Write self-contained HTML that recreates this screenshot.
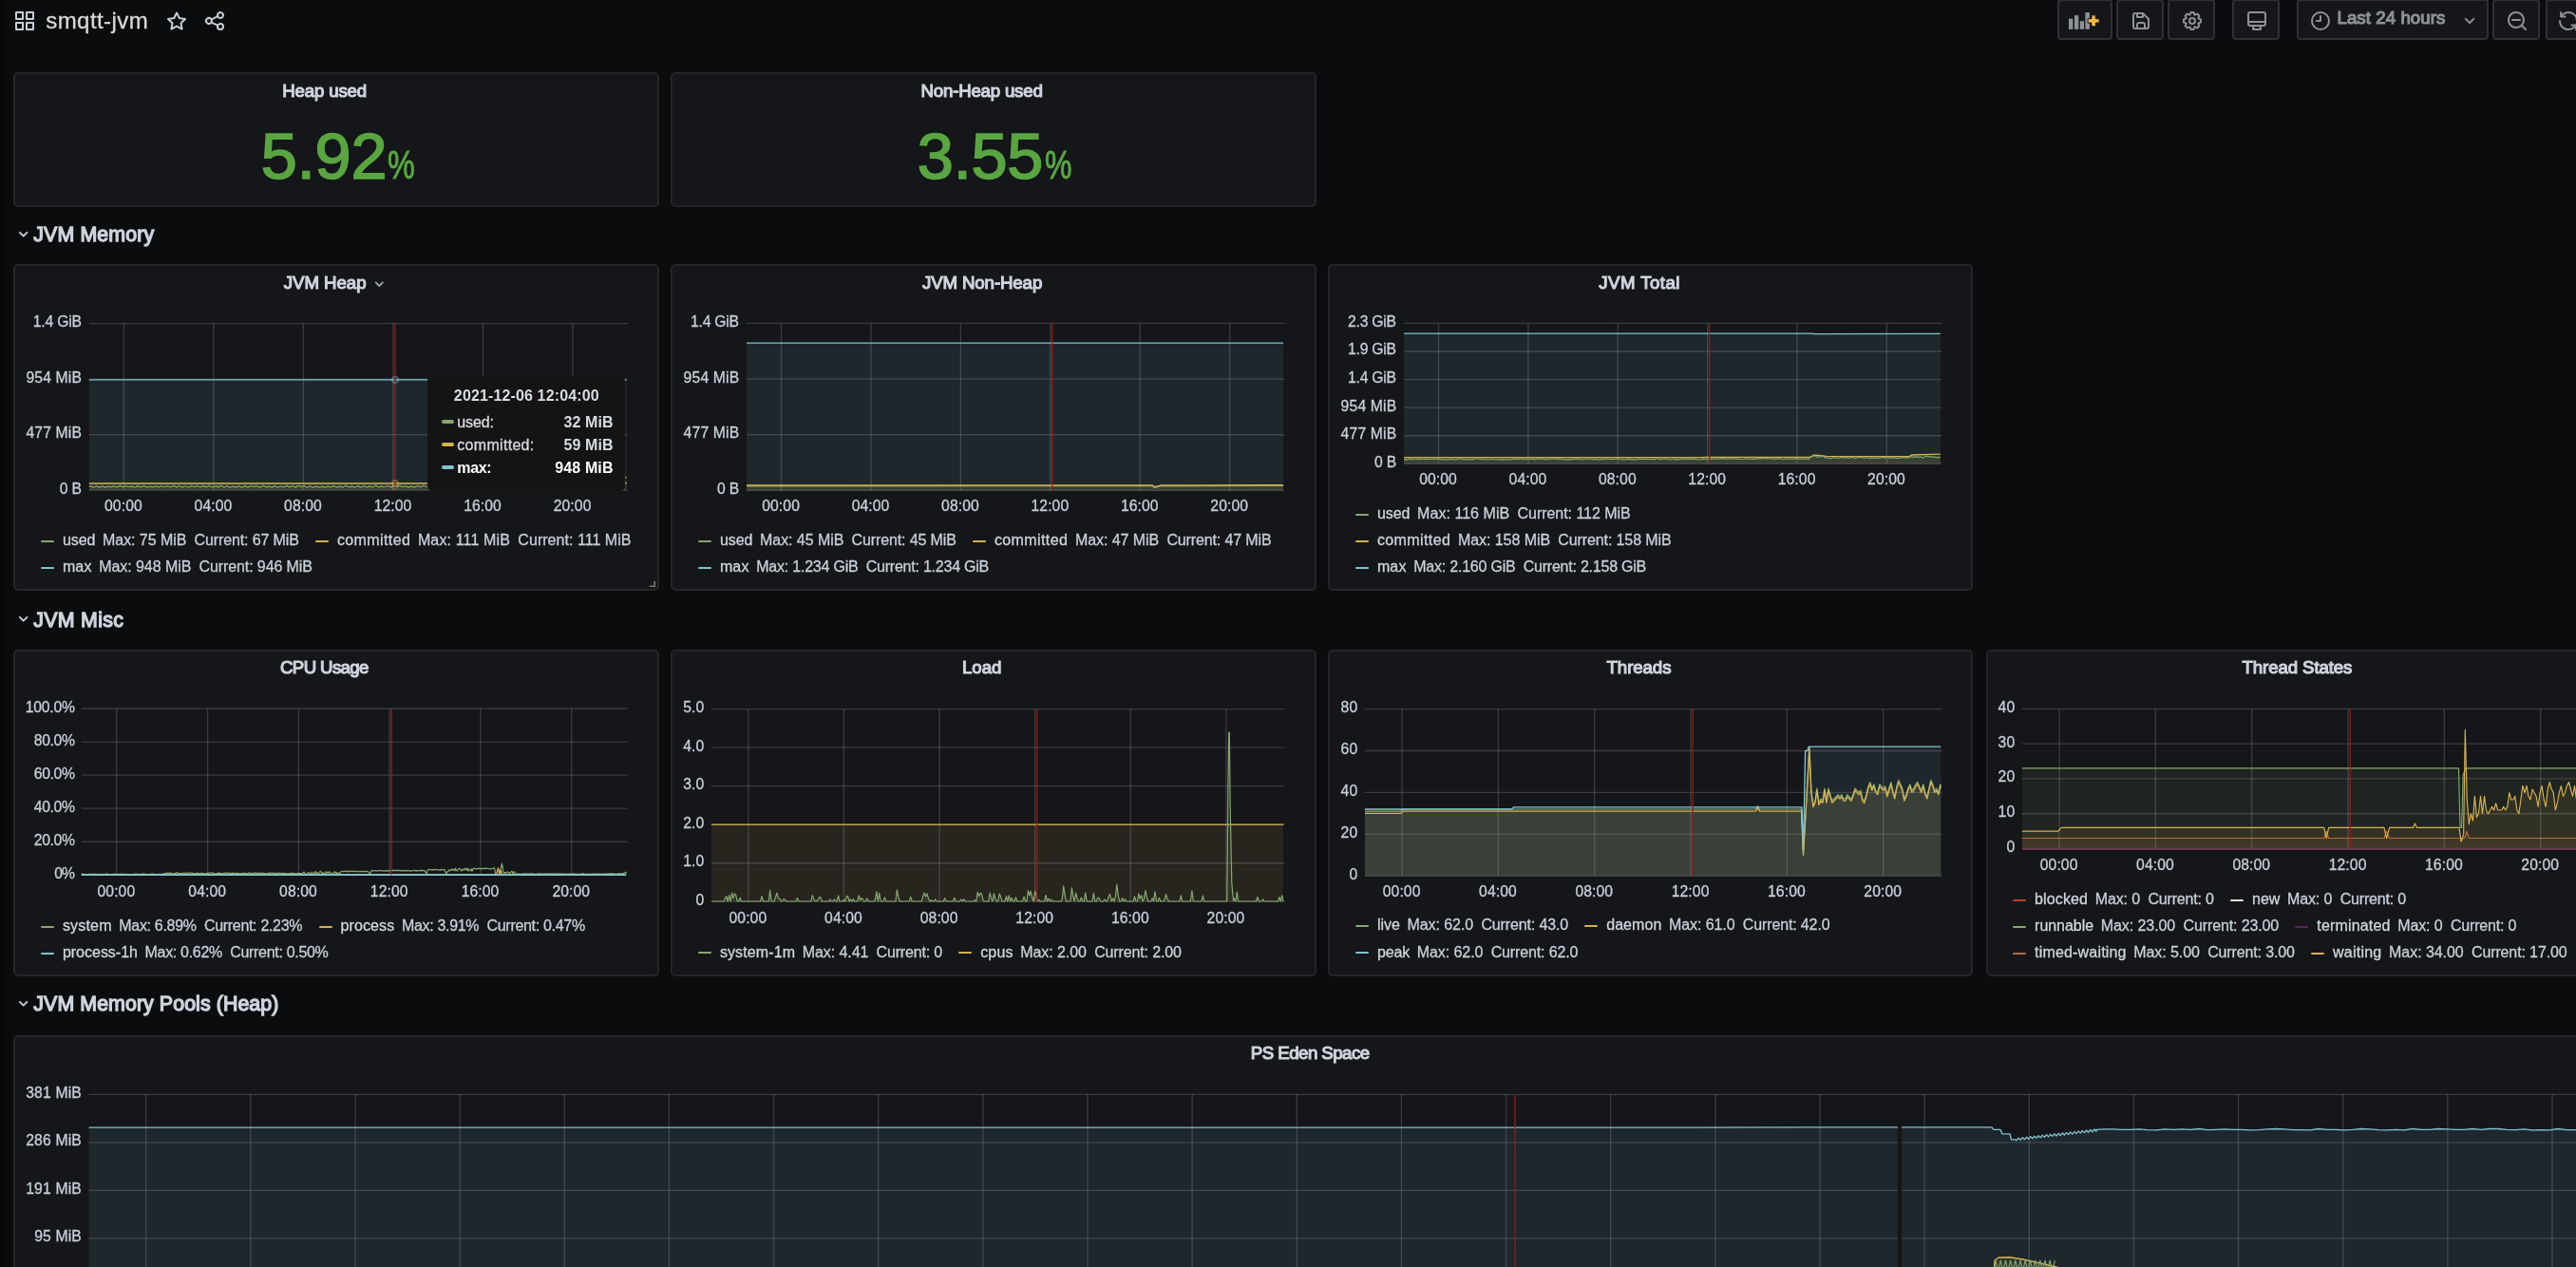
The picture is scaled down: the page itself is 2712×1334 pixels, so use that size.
<!DOCTYPE html>
<html lang="en"><head><meta charset="utf-8"><title>smqtt-jvm - Grafana</title>
<style>
html,body{margin:0;padding:0;background:#0b0c0e;}
body{width:2712px;height:1334px;overflow:hidden;position:relative;font-family:"Liberation Sans",sans-serif;}
#root{will-change:transform;position:absolute;left:0;top:0;width:2712px;height:1334px;overflow:hidden;background:linear-gradient(to right,#060708 0,#0b0c0e 13px);}
.t{position:absolute;white-space:pre;display:block;}
.ic{position:absolute;display:block;overflow:visible;}
.panel{position:absolute;box-sizing:border-box;background:#141619;border:2px solid #232529;border-radius:5px;}
.btn{position:absolute;box-sizing:border-box;background:#141619;border:2px solid #2e3034;border-radius:4px;}
.sw{position:absolute;border-radius:1px;}
.tip{position:absolute;background:#141414;border-radius:5px;}
</style></head><body><div id="root">
<svg class="ic" style="left:13.80px;top:10.00px" width="24" height="24" viewBox="0 0 24 24" fill="#c7d0d9"><path d="M10,13H3a1,1,0,0,0-1,1v7a1,1,0,0,0,1,1h7a1,1,0,0,0,1-1V14A1,1,0,0,0,10,13ZM9,20H4V15H9ZM21,2H14a1,1,0,0,0-1,1v7a1,1,0,0,0,1,1h7a1,1,0,0,0,1-1V3A1,1,0,0,0,21,2ZM20,9H15V4h5Zm1,4H14a1,1,0,0,0-1,1v7a1,1,0,0,0,1,1h7a1,1,0,0,0,1-1V14A1,1,0,0,0,21,13Zm-1,7H15V15h5ZM10,2H3A1,1,0,0,0,2,3v7a1,1,0,0,0,1,1h7a1,1,0,0,0,1-1V3A1,1,0,0,0,10,2ZM9,9H4V4H9Z"/></svg>
<span class="t" style="left:48.30px;top:9.80px;font-size:24px;line-height:24px;color:#d8d9da;letter-spacing:0.417px;-webkit-text-stroke:0.3px #d8d9da;">smqtt-jvm</span>
<svg class="ic" style="left:174.00px;top:10.00px" width="24" height="24" viewBox="0 0 24 24" fill="#c7d0d9"><path d="M22,9.67A1,1,0,0,0,21.14,9l-5.69-.83L12.9,3a1,1,0,0,0-1.8,0L8.55,8.16,2.86,9a1,1,0,0,0-.81.68,1,1,0,0,0,.25,1l4.13,4-1,5.68A1,1,0,0,0,6.9,21.44L12,18.77l5.1,2.67a.93.93,0,0,0,.46.12,1,1,0,0,0,.59-.19,1,1,0,0,0,.4-1l-1-5.68,4.13-4A1,1,0,0,0,22,9.67Zm-6.15,4a1,1,0,0,0-.29.88l.72,4.2-3.76-2a1.06,1.06,0,0,0-.94,0l-3.76,2,.72-4.2a1,1,0,0,0-.29-.88l-3-3,4.21-.61a1,1,0,0,0,.76-.55L12,5.7l1.88,3.82a1,1,0,0,0,.76.55l4.21.61Z"/></svg>
<svg class="ic" style="left:214.20px;top:10.10px" width="24" height="24" viewBox="0 0 24 24" fill="#c7d0d9"><path d="M18,14a4,4,0,0,0-3.08,1.48l-5.1-2.35a3.64,3.64,0,0,0,0-2.26l5.1-2.35A4,4,0,1,0,14,6a4.17,4.17,0,0,0,.07.71L8.79,9.14a4,4,0,1,0,0,5.72l5.28,2.43A4.17,4.17,0,0,0,14,18a4,4,0,1,0,4-4ZM18,4a2,2,0,1,1-2,2A2,2,0,0,1,18,4ZM6,14a2,2,0,1,1,2-2A2,2,0,0,1,6,14Zm12,6a2,2,0,1,1,2-2A2,2,0,0,1,18,20Z"/></svg>
<div class="btn" style="left:2166.30px;top:-1.20px;width:57.50px;height:43.00px;"></div>
<div class="btn" style="left:2228.20px;top:-1.20px;width:49.60px;height:43.00px;"></div>
<div class="btn" style="left:2282.10px;top:-1.20px;width:49.50px;height:43.00px;"></div>
<div class="btn" style="left:2350.30px;top:-1.20px;width:49.40px;height:43.00px;"></div>
<div class="btn" style="left:2418.20px;top:-1.20px;width:201.60px;height:43.00px;"></div>
<div class="btn" style="left:2624.00px;top:-1.20px;width:50.00px;height:43.00px;"></div>
<div class="btn" style="left:2680.00px;top:-1.20px;width:60.00px;height:43.00px;"></div>
<svg class="ic" style="left:2177px;top:12px" width="36" height="20" viewBox="0 0 36 20">
<defs><linearGradient id="pg" x1="0" y1="0" x2="0" y2="1"><stop offset="0" stop-color="#f2a33c"/><stop offset="1" stop-color="#f7cf4c"/></linearGradient></defs>
<g fill="#8e9197"><rect x="1" y="7.7" width="4.4" height="11.1"/><rect x="7" y="4.1" width="4.3" height="14.7"/><rect x="12.8" y="10.2" width="4.3" height="8.6"/><rect x="18.4" y="1.1" width="4.5" height="17.7"/></g>
<path d="M24.9 3.85h4.4v3.8h3.8v4.4h-3.8v3.8h-4.4v-3.8h-3.8v-4.4h3.8z" fill="url(#pg)" stroke="#141619" stroke-width="1"/>
</svg>
<svg class="ic" style="left:2242.10px;top:9.90px" width="24" height="24" viewBox="0 0 24 24" fill="#8e9197"><path d="M20.71,9.29l-6-6a1,1,0,0,0-.32-.21A1.09,1.09,0,0,0,14,3H6A3,3,0,0,0,3,6V18a3,3,0,0,0,3,3H18a3,3,0,0,0,3-3V10A1,1,0,0,0,20.71,9.29ZM9,5h4V7H9Zm6,14H9V16a1,1,0,0,1,1-1h4a1,1,0,0,1,1,1Zm4-1a1,1,0,0,1-1,1H17V16a3,3,0,0,0-3-3H10a3,3,0,0,0-3,3v3H6a1,1,0,0,1-1-1V6A1,1,0,0,1,6,5H7V8A1,1,0,0,0,8,9h6a1,1,0,0,0,1-1V6.41l4,4Z"/></svg>
<svg class="ic" style="left:2296.00px;top:10.00px" width="24" height="24" viewBox="0 0 24 24" fill="#8e9197"><path d="M21.32,9.55l-1.89-.63.89-1.78A1,1,0,0,0,20.13,6L18,3.87a1,1,0,0,0-1.15-.19l-1.78.89-.63-1.89A1,1,0,0,0,13.5,2h-3a1,1,0,0,0-.95.68L8.92,4.57,7.14,3.68A1,1,0,0,0,6,3.87L3.87,6a1,1,0,0,0-.19,1.15l.89,1.78-1.89.63A1,1,0,0,0,2,10.5v3a1,1,0,0,0,.68.95l1.89.63-.89,1.78A1,1,0,0,0,3.87,18L6,20.13a1,1,0,0,0,1.15.19l1.78-.89.63,1.89a1,1,0,0,0,.95.68h3a1,1,0,0,0,.95-.68l.63-1.89,1.78.89A1,1,0,0,0,18,20.13L20.13,18a1,1,0,0,0,.19-1.15l-.89-1.78,1.89-.63A1,1,0,0,0,22,13.5v-3A1,1,0,0,0,21.32,9.55ZM20,12.78l-1.2.4A2,2,0,0,0,17.64,16l.57,1.14-1.1,1.1L16,17.64a2,2,0,0,0-2.79,1.16l-.4,1.2H11.22l-.4-1.2A2,2,0,0,0,8,17.64l-1.14.57-1.1-1.1L6.36,16A2,2,0,0,0,5.2,13.18L4,12.78V11.22l1.2-.4A2,2,0,0,0,6.36,8L5.79,6.89l1.1-1.1L8,6.36A2,2,0,0,0,10.82,5.2l.4-1.2h1.56l.4,1.2A2,2,0,0,0,16,6.36l1.14-.57,1.1,1.1L17.64,8a2,2,0,0,0,1.16,2.79l1.2.4ZM12,8a4,4,0,1,0,4,4A4,4,0,0,0,12,8Zm0,6a2,2,0,1,1,2-2A2,2,0,0,1,12,14Z"/></svg>
<svg class="ic" style="left:2363.90px;top:10.00px" width="24" height="24" viewBox="0 0 24 24" fill="#8e9197"><path d="M19,2H5A3,3,0,0,0,2,5V15a3,3,0,0,0,3,3H7.64l-.58,1a2,2,0,0,0,0,2,2,2,0,0,0,1.75,1h6.46A2,2,0,0,0,17,21a2,2,0,0,0,0-2l-.59-1H19a3,3,0,0,0,3-3V5A3,3,0,0,0,19,2ZM8.77,20,10,18H14l1.2,2ZM20,15a1,1,0,0,1-1,1H5a1,1,0,0,1-1-1V14H20Zm0-3H4V5A1,1,0,0,1,5,4H19a1,1,0,0,1,1,1Z"/></svg>
<svg class="ic" style="left:2430.80px;top:9.90px" width="24" height="24" viewBox="0 0 24 24" fill="#8e9197"><path d="M12,2A10,10,0,1,0,22,12,10,10,0,0,0,12,2Zm0,18a8,8,0,1,1,8-8A8,8,0,0,1,12,20ZM12,6a1,1,0,0,0-1,1v4H8a1,1,0,0,0,0,2h4a1,1,0,0,0,1-1V7A1,1,0,0,0,12,6Z"/></svg>
<span class="t" style="left:2460.48px;top:10.46px;font-size:18.67px;line-height:18.67px;color:#8e9197;letter-spacing:0.071px;-webkit-text-stroke:1.15px #8e9197;">Last 24 hours</span>
<svg class="ic" style="left:2588.00px;top:10.00px" width="24" height="24" viewBox="0 0 24 24" fill="#8e9197"><path d="M17,9.17a1,1,0,0,0-1.41,0L12,12.71,8.46,9.17a1,1,0,0,0-1.41,0,1,1,0,0,0,0,1.42l4.24,4.24a1,1,0,0,0,1.42,0L17,10.59A1,1,0,0,0,17,9.17Z"/></svg>
<svg class="ic" style="left:2637.80px;top:10.00px" width="24" height="24" viewBox="0 0 24 24" fill="#8e9197"><path d="M21.71,20.29,18,16.61A9,9,0,1,0,16.61,18l3.68,3.68a1,1,0,0,0,1.42,0A1,1,0,0,0,21.71,20.29ZM11,18a7,7,0,1,1,7-7A7,7,0,0,1,11,18Zm4-8H7a1,1,0,0,0,0,2h8a1,1,0,0,0,0-2Z"/></svg>
<svg class="ic" style="left:2691.70px;top:10.00px" width="24" height="24" viewBox="0 0 24 24" fill="#8e9197"><path d="M19.91,15.51H15.38a1,1,0,0,0,0,2h2.4A8,8,0,0,1,4,12a1,1,0,0,0-2,0,10,10,0,0,0,16.88,7.23V21a1,1,0,0,0,2,0V16.5A1,1,0,0,0,19.91,15.51ZM12,2A10,10,0,0,0,5.12,4.77V3a1,1,0,0,0-2,0V7.5a1,1,0,0,0,1,1h4.5a1,1,0,0,0,0-2H6.22A8,8,0,0,1,20,12a1,1,0,0,0,2,0A10,10,0,0,0,12,2Z"/></svg>
<div class="panel" style="left:14.00px;top:76.00px;width:680.00px;height:142.00px;"></div>
<span class="t" style="left:297.25px;top:87.47px;font-size:18.67px;line-height:18.67px;color:#ced4dd;letter-spacing:-0.168px;-webkit-text-stroke:1.15px #ced4dd;">Heap used</span>
<span class="t" style="left:274.81px;top:130.55px;font-size:68.5px;line-height:68.5px;color:#59a640;letter-spacing:-0.203px;-webkit-text-stroke:1.7px #59a640;">5.92</span>
<span class="t" style="left:408.15px;top:152.80px;font-size:42px;line-height:42px;color:#59a640;letter-spacing:-6.583px;-webkit-text-stroke:1.0px #59a640;transform:scaleX(0.7703160270880361);transform-origin:0 0;">%</span>
<div class="panel" style="left:706.00px;top:76.00px;width:680.00px;height:142.00px;"></div>
<span class="t" style="left:969.51px;top:87.47px;font-size:18.67px;line-height:18.67px;color:#ced4dd;letter-spacing:-0.198px;-webkit-text-stroke:1.15px #ced4dd;">Non-Heap used</span>
<span class="t" style="left:965.85px;top:130.55px;font-size:68.5px;line-height:68.5px;color:#59a640;letter-spacing:-0.265px;-webkit-text-stroke:1.7px #59a640;">3.55</span>
<span class="t" style="left:1100.06px;top:152.80px;font-size:42px;line-height:42px;color:#59a640;letter-spacing:-6.583px;-webkit-text-stroke:1.0px #59a640;transform:scaleX(0.7618510158013545);transform-origin:0 0;">%</span>
<svg class="ic" style="left:13.50px;top:236.10px" width="21.3" height="21.3" viewBox="0 0 24 24" fill="#c7d0d9"><path d="M17,9.17a1,1,0,0,0-1.41,0L12,12.71,8.46,9.17a1,1,0,0,0-1.41,0,1,1,0,0,0,0,1.42l4.24,4.24a1,1,0,0,0,1.42,0L17,10.59A1,1,0,0,0,17,9.17Z"/></svg>
<span class="t" style="left:35.33px;top:236.64px;font-size:21.33px;line-height:21.33px;color:#ced4dd;letter-spacing:0.132px;-webkit-text-stroke:1.3px #ced4dd;">JVM Memory</span>
<svg class="ic" style="left:13.50px;top:641.00px" width="21.3" height="21.3" viewBox="0 0 24 24" fill="#c7d0d9"><path d="M17,9.17a1,1,0,0,0-1.41,0L12,12.71,8.46,9.17a1,1,0,0,0-1.41,0,1,1,0,0,0,0,1.42l4.24,4.24a1,1,0,0,0,1.42,0L17,10.59A1,1,0,0,0,17,9.17Z"/></svg>
<span class="t" style="left:35.33px;top:642.63px;font-size:21.33px;line-height:21.33px;color:#ced4dd;letter-spacing:0.298px;-webkit-text-stroke:1.3px #ced4dd;">JVM Misc</span>
<svg class="ic" style="left:13.50px;top:1046.30px" width="21.3" height="21.3" viewBox="0 0 24 24" fill="#c7d0d9"><path d="M17,9.17a1,1,0,0,0-1.41,0L12,12.71,8.46,9.17a1,1,0,0,0-1.41,0,1,1,0,0,0,0,1.42l4.24,4.24a1,1,0,0,0,1.42,0L17,10.59A1,1,0,0,0,17,9.17Z"/></svg>
<span class="t" style="left:35.33px;top:1046.63px;font-size:21.33px;line-height:21.33px;color:#ced4dd;letter-spacing:0.092px;-webkit-text-stroke:1.3px #ced4dd;">JVM Memory Pools (Heap)</span>
<div class="panel" style="left:14.00px;top:278.00px;width:680.00px;height:344.00px;"></div>
<span class="t" style="left:298.69px;top:289.47px;font-size:18.67px;line-height:18.67px;color:#ced4dd;letter-spacing:-0.029px;-webkit-text-stroke:1.15px #ced4dd;">JVM Heap</span>
<svg class="ic" style="left:388.60px;top:289.30px" width="20.5" height="20.5" viewBox="0 0 24 24" fill="#9fa7b3"><path d="M17,9.17a1,1,0,0,0-1.41,0L12,12.71,8.46,9.17a1,1,0,0,0-1.41,0,1,1,0,0,0,0,1.42l4.24,4.24a1,1,0,0,0,1.42,0L17,10.59A1,1,0,0,0,17,9.17Z"/></svg>
<svg class="ic" style="left:91px;top:338px" width="573" height="183" viewBox="91 338 573 183"><polygon points="93.8,516.2 93.8,399.8 657.4,399.8 658.5,400.1 659.5,400.1 659.5,516.2" fill="#80C4D4" fill-opacity="0.1"/><polygon points="93.8,516.2 93.8,509.0 522.7,509.0 525.0,507.6 626.6,507.4 629.0,502.9 659.5,502.6 659.5,516.2" fill="#D8B250" fill-opacity="0.1"/><polygon points="93.8,516.2 93.8,512.4 95.7,511.9 97.6,512.6 99.5,513.1 101.4,511.5 103.3,512.5 105.1,513.4 107.0,511.8 108.9,512.4 110.8,513.1 112.7,512.6 114.6,512.0 116.5,512.9 118.4,512.3 120.3,511.9 122.2,512.7 124.1,512.8 125.9,511.3 127.8,511.9 129.7,513.1 131.6,511.6 133.5,512.1 135.4,512.5 137.3,512.7 139.2,511.9 141.1,512.9 143.0,513.0 144.8,511.3 146.7,512.4 148.6,512.9 150.5,511.8 152.4,511.9 154.3,512.9 156.2,512.8 158.1,512.0 160.0,512.9 161.9,512.6 163.8,511.7 165.6,512.4 167.5,512.9 169.4,511.9 171.3,512.0 173.2,512.7 175.1,512.1 177.0,511.8 178.9,512.7 180.8,512.6 182.7,511.2 184.6,512.1 186.4,513.2 188.3,511.3 190.2,512.3 192.1,513.1 194.0,511.9 195.9,512.0 197.8,512.8 199.7,513.0 201.6,511.4 203.5,512.2 205.3,512.8 207.2,511.3 209.1,512.2 211.0,512.8 212.9,511.9 214.8,511.6 216.7,512.9 218.6,512.1 220.5,511.1 222.4,512.6 224.3,512.7 226.1,512.1 228.0,511.9 229.9,512.9 231.8,511.5 233.7,511.4 235.6,513.1 237.5,512.5 239.4,511.4 241.3,513.1 243.2,512.8 245.1,511.9 246.9,512.6 248.8,513.4 250.7,511.6 252.6,512.2 254.5,513.2 256.4,512.4 258.3,511.2 260.2,513.2 262.1,512.7 264.0,511.5 265.9,512.0 267.7,512.6 269.6,511.4 271.5,512.2 273.4,513.1 275.3,512.3 277.2,511.3 279.1,512.4 281.0,512.9 282.9,511.9 284.8,512.7 286.6,513.1 288.5,511.7 290.4,512.0 292.3,513.2 294.2,512.5 296.1,511.8 298.0,513.0 299.9,512.4 301.8,511.1 303.7,512.4 305.6,512.8 307.4,511.5 309.3,512.0 311.2,513.4 313.1,511.5 315.0,511.5 316.9,512.6 318.8,512.0 320.7,511.7 322.6,512.8 324.5,513.1 326.4,511.4 328.2,512.7 330.1,513.4 332.0,512.1 333.9,512.2 335.8,513.1 337.7,512.7 339.6,512.1 341.5,513.1 343.4,513.0 345.3,511.7 347.1,512.8 349.0,512.6 350.9,511.6 352.8,512.3 354.7,513.2 356.6,512.3 358.5,511.8 360.4,513.2 362.3,512.2 364.2,511.1 366.1,512.5 367.9,512.9 369.8,512.1 371.7,512.4 373.6,513.2 375.5,512.2 377.4,511.4 379.3,513.2 381.2,512.9 383.1,511.1 385.0,512.6 386.9,513.2 388.7,511.6 390.6,512.6 392.5,513.0 394.4,511.4 396.3,511.4 398.2,512.8 400.1,512.6 402.0,511.7 403.9,513.0 405.8,512.5 407.7,511.5 409.5,512.0 411.4,513.1 413.3,512.1 415.2,511.6 417.1,512.5 419.0,511.9 420.9,511.3 422.8,512.5 424.7,512.4 426.6,511.8 428.4,512.4 430.3,513.1 432.2,512.2 434.1,512.4 436.0,513.2 437.9,512.3 439.8,511.5 441.7,512.4 443.6,512.6 445.5,511.1 447.4,512.0 449.2,512.4 451.1,511.8 453.0,512.3 454.9,513.3 456.8,512.3 458.7,512.0 460.6,512.8 462.5,512.0 464.4,511.2 466.3,512.6 468.2,512.6 470.0,511.3 471.9,512.6 473.8,512.8 475.7,511.5 477.6,511.5 479.5,512.7 481.4,512.3 483.3,511.9 485.2,512.4 487.1,512.9 488.9,511.3 490.8,511.8 492.7,513.1 494.6,511.9 496.5,511.4 498.4,512.8 500.3,512.5 502.2,512.0 504.1,513.1 506.0,512.2 507.9,511.2 509.7,512.7 511.6,512.6 513.5,511.3 515.4,511.8 517.3,513.2 519.2,512.0 521.1,512.0 523.0,510.2 524.9,510.1 526.8,509.0 528.7,509.3 530.5,511.4 532.4,510.2 534.3,510.3 536.2,511.6 538.1,509.7 540.0,509.4 541.9,510.5 543.8,509.8 545.7,509.3 547.6,511.0 549.5,511.9 551.3,509.7 553.2,509.6 555.1,511.1 557.0,509.6 558.9,510.1 560.8,511.2 562.7,509.8 564.6,509.2 566.5,509.4 568.4,510.3 570.2,509.3 572.1,510.0 574.0,510.8 575.9,508.8 577.8,508.4 579.7,510.9 581.6,508.9 583.5,510.5 585.4,511.5 587.3,511.5 589.2,508.6 591.0,510.5 592.9,510.2 594.8,509.1 596.7,509.9 598.6,510.6 600.5,508.9 602.4,509.8 604.3,510.7 606.2,511.1 608.1,509.1 610.0,510.7 611.8,511.6 613.7,509.4 615.6,510.7 617.5,509.8 619.4,510.1 621.3,510.7 623.2,510.9 625.1,510.7 627.0,506.8 628.9,509.9 630.7,508.5 632.6,508.5 634.5,508.6 636.4,510.2 638.3,507.5 640.2,508.6 642.1,509.8 644.0,508.3 645.9,507.9 647.8,509.1 649.7,509.3 651.5,508.9 653.4,509.8 655.3,509.9 657.2,507.8 659.1,508.4 659.5,509.9 659.5,516.2" fill="#85A870" fill-opacity="0.1"/><path d="M93.8 340.60H661.0 M93.8 399.13H661.0 M93.8 457.67H661.0 M93.8 516.20H661.0" stroke="rgba(204,204,210,0.2)" stroke-width="1.33" fill="none"/><path d="M130.34 340.6V516.2 M224.87 340.6V516.2 M319.40 340.6V516.2 M413.94 340.6V516.2 M508.47 340.6V516.2 M603.00 340.6V516.2" stroke="rgba(204,204,210,0.2)" stroke-width="1.33" fill="none"/><polyline points="93.8,399.8 657.4,399.8 658.5,400.1 659.5,400.1" fill="none" stroke="#80C4D4" stroke-width="1.3" stroke-linejoin="round"/><polyline points="93.8,509.0 522.7,509.0 525.0,507.6 626.6,507.4 629.0,502.9 659.5,502.6" fill="none" stroke="#D8B250" stroke-width="1.3" stroke-linejoin="round"/><polyline points="93.8,512.4 95.7,511.9 97.6,512.6 99.5,513.1 101.4,511.5 103.3,512.5 105.1,513.4 107.0,511.8 108.9,512.4 110.8,513.1 112.7,512.6 114.6,512.0 116.5,512.9 118.4,512.3 120.3,511.9 122.2,512.7 124.1,512.8 125.9,511.3 127.8,511.9 129.7,513.1 131.6,511.6 133.5,512.1 135.4,512.5 137.3,512.7 139.2,511.9 141.1,512.9 143.0,513.0 144.8,511.3 146.7,512.4 148.6,512.9 150.5,511.8 152.4,511.9 154.3,512.9 156.2,512.8 158.1,512.0 160.0,512.9 161.9,512.6 163.8,511.7 165.6,512.4 167.5,512.9 169.4,511.9 171.3,512.0 173.2,512.7 175.1,512.1 177.0,511.8 178.9,512.7 180.8,512.6 182.7,511.2 184.6,512.1 186.4,513.2 188.3,511.3 190.2,512.3 192.1,513.1 194.0,511.9 195.9,512.0 197.8,512.8 199.7,513.0 201.6,511.4 203.5,512.2 205.3,512.8 207.2,511.3 209.1,512.2 211.0,512.8 212.9,511.9 214.8,511.6 216.7,512.9 218.6,512.1 220.5,511.1 222.4,512.6 224.3,512.7 226.1,512.1 228.0,511.9 229.9,512.9 231.8,511.5 233.7,511.4 235.6,513.1 237.5,512.5 239.4,511.4 241.3,513.1 243.2,512.8 245.1,511.9 246.9,512.6 248.8,513.4 250.7,511.6 252.6,512.2 254.5,513.2 256.4,512.4 258.3,511.2 260.2,513.2 262.1,512.7 264.0,511.5 265.9,512.0 267.7,512.6 269.6,511.4 271.5,512.2 273.4,513.1 275.3,512.3 277.2,511.3 279.1,512.4 281.0,512.9 282.9,511.9 284.8,512.7 286.6,513.1 288.5,511.7 290.4,512.0 292.3,513.2 294.2,512.5 296.1,511.8 298.0,513.0 299.9,512.4 301.8,511.1 303.7,512.4 305.6,512.8 307.4,511.5 309.3,512.0 311.2,513.4 313.1,511.5 315.0,511.5 316.9,512.6 318.8,512.0 320.7,511.7 322.6,512.8 324.5,513.1 326.4,511.4 328.2,512.7 330.1,513.4 332.0,512.1 333.9,512.2 335.8,513.1 337.7,512.7 339.6,512.1 341.5,513.1 343.4,513.0 345.3,511.7 347.1,512.8 349.0,512.6 350.9,511.6 352.8,512.3 354.7,513.2 356.6,512.3 358.5,511.8 360.4,513.2 362.3,512.2 364.2,511.1 366.1,512.5 367.9,512.9 369.8,512.1 371.7,512.4 373.6,513.2 375.5,512.2 377.4,511.4 379.3,513.2 381.2,512.9 383.1,511.1 385.0,512.6 386.9,513.2 388.7,511.6 390.6,512.6 392.5,513.0 394.4,511.4 396.3,511.4 398.2,512.8 400.1,512.6 402.0,511.7 403.9,513.0 405.8,512.5 407.7,511.5 409.5,512.0 411.4,513.1 413.3,512.1 415.2,511.6 417.1,512.5 419.0,511.9 420.9,511.3 422.8,512.5 424.7,512.4 426.6,511.8 428.4,512.4 430.3,513.1 432.2,512.2 434.1,512.4 436.0,513.2 437.9,512.3 439.8,511.5 441.7,512.4 443.6,512.6 445.5,511.1 447.4,512.0 449.2,512.4 451.1,511.8 453.0,512.3 454.9,513.3 456.8,512.3 458.7,512.0 460.6,512.8 462.5,512.0 464.4,511.2 466.3,512.6 468.2,512.6 470.0,511.3 471.9,512.6 473.8,512.8 475.7,511.5 477.6,511.5 479.5,512.7 481.4,512.3 483.3,511.9 485.2,512.4 487.1,512.9 488.9,511.3 490.8,511.8 492.7,513.1 494.6,511.9 496.5,511.4 498.4,512.8 500.3,512.5 502.2,512.0 504.1,513.1 506.0,512.2 507.9,511.2 509.7,512.7 511.6,512.6 513.5,511.3 515.4,511.8 517.3,513.2 519.2,512.0 521.1,512.0 523.0,510.2 524.9,510.1 526.8,509.0 528.7,509.3 530.5,511.4 532.4,510.2 534.3,510.3 536.2,511.6 538.1,509.7 540.0,509.4 541.9,510.5 543.8,509.8 545.7,509.3 547.6,511.0 549.5,511.9 551.3,509.7 553.2,509.6 555.1,511.1 557.0,509.6 558.9,510.1 560.8,511.2 562.7,509.8 564.6,509.2 566.5,509.4 568.4,510.3 570.2,509.3 572.1,510.0 574.0,510.8 575.9,508.8 577.8,508.4 579.7,510.9 581.6,508.9 583.5,510.5 585.4,511.5 587.3,511.5 589.2,508.6 591.0,510.5 592.9,510.2 594.8,509.1 596.7,509.9 598.6,510.6 600.5,508.9 602.4,509.8 604.3,510.7 606.2,511.1 608.1,509.1 610.0,510.7 611.8,511.6 613.7,509.4 615.6,510.7 617.5,509.8 619.4,510.1 621.3,510.7 623.2,510.9 625.1,510.7 627.0,506.8 628.9,509.9 630.7,508.5 632.6,508.5 634.5,508.6 636.4,510.2 638.3,507.5 640.2,508.6 642.1,509.8 644.0,508.3 645.9,507.9 647.8,509.1 649.7,509.3 651.5,508.9 653.4,509.8 655.3,509.9 657.2,507.8 659.1,508.4 659.5,509.9" fill="none" stroke="#85A870" stroke-width="1.2" stroke-linejoin="round"/><path d="M415.97 340.6V516.2" stroke="rgba(150,28,24,0.85)" stroke-width="1.5"/></svg>
<span class="t" style="left:34.84px;top:330.95px;font-size:15.7px;line-height:15.7px;color:#c7d0d9;letter-spacing:-0.211px;-webkit-text-stroke:0.3px #c7d0d9;">1.4 GiB</span>
<span class="t" style="left:27.42px;top:389.95px;font-size:15.7px;line-height:15.7px;color:#c7d0d9;letter-spacing:0.162px;-webkit-text-stroke:0.3px #c7d0d9;">954 MiB</span>
<span class="t" style="left:27.42px;top:447.95px;font-size:15.7px;line-height:15.7px;color:#c7d0d9;letter-spacing:0.162px;-webkit-text-stroke:0.3px #c7d0d9;">477 MiB</span>
<span class="t" style="left:62.82px;top:506.95px;font-size:15.7px;line-height:15.7px;color:#c7d0d9;letter-spacing:-0.220px;-webkit-text-stroke:0.3px #c7d0d9;">0 B</span>
<span class="t" style="left:110.03px;top:524.95px;font-size:15.7px;line-height:15.7px;color:#c7d0d9;letter-spacing:0.105px;-webkit-text-stroke:0.3px #c7d0d9;">00:00</span>
<span class="t" style="left:204.56px;top:524.95px;font-size:15.7px;line-height:15.7px;color:#c7d0d9;letter-spacing:0.105px;-webkit-text-stroke:0.3px #c7d0d9;">04:00</span>
<span class="t" style="left:299.10px;top:524.95px;font-size:15.7px;line-height:15.7px;color:#c7d0d9;letter-spacing:0.105px;-webkit-text-stroke:0.3px #c7d0d9;">08:00</span>
<span class="t" style="left:393.63px;top:524.95px;font-size:15.7px;line-height:15.7px;color:#c7d0d9;letter-spacing:0.105px;-webkit-text-stroke:0.3px #c7d0d9;">12:00</span>
<span class="t" style="left:488.16px;top:524.95px;font-size:15.7px;line-height:15.7px;color:#c7d0d9;letter-spacing:0.105px;-webkit-text-stroke:0.3px #c7d0d9;">16:00</span>
<span class="t" style="left:582.70px;top:524.95px;font-size:15.7px;line-height:15.7px;color:#c7d0d9;letter-spacing:0.105px;-webkit-text-stroke:0.3px #c7d0d9;">20:00</span>
<svg class="ic" style="left:408.0px;top:390px" width="16" height="130" viewBox="408.0 390 16 130"><circle cx="416.0" cy="399.8" r="3.2" fill="none" stroke="#80C4D4" stroke-opacity="0.4" stroke-width="1.8"/><circle cx="416.0" cy="509.0" r="3.2" fill="none" stroke="#D8B250" stroke-opacity="0.4" stroke-width="1.8"/><circle cx="416.0" cy="512.3" r="3.2" fill="none" stroke="#85A870" stroke-opacity="0.3" stroke-width="1.8"/></svg>
<div class="tip" style="left:450.20px;top:395.80px;width:207.40px;height:121.20px;"></div>
<span class="t" style="left:477.85px;top:408.80px;font-size:16px;line-height:16px;color:#d8dde4;letter-spacing:0.135px;font-weight:700;">2021-12-06 12:04:00</span>
<div class="sw" style="left:465.30px;top:442.20px;width:12.70px;height:4.20px;background:#85A870;border-radius:2px;"></div>
<span class="t" style="left:481.30px;top:436.80px;font-size:16px;line-height:16px;color:#d8dde4;letter-spacing:-0.139px;-webkit-text-stroke:0.3px #d8dde4;">used:</span>
<span class="t" style="left:593.59px;top:436.80px;font-size:16px;line-height:16px;color:#d8dde4;letter-spacing:0.068px;font-weight:700;">32 MiB</span>
<div class="sw" style="left:465.30px;top:466.00px;width:12.70px;height:4.20px;background:#D8B250;border-radius:2px;"></div>
<span class="t" style="left:481.30px;top:460.80px;font-size:16px;line-height:16px;color:#d8dde4;letter-spacing:0.302px;-webkit-text-stroke:0.3px #d8dde4;">committed:</span>
<span class="t" style="left:593.59px;top:460.80px;font-size:16px;line-height:16px;color:#d8dde4;letter-spacing:0.068px;font-weight:700;">59 MiB</span>
<div class="sw" style="left:465.30px;top:490.20px;width:12.70px;height:4.20px;background:#80C4D4;border-radius:2px;"></div>
<span class="t" style="left:481.30px;top:484.80px;font-size:16px;line-height:16px;color:#ffffff;letter-spacing:-0.317px;font-weight:700;">max:</span>
<span class="t" style="left:584.26px;top:484.80px;font-size:16px;line-height:16px;color:#ffffff;letter-spacing:0.129px;font-weight:700;">948 MiB</span>
<div class="sw" style="left:43.00px;top:569.10px;width:14.00px;height:2.00px;background:#85A870;"></div>
<span class="t" style="left:65.90px;top:560.80px;font-size:16px;line-height:16px;color:#d0d6dd;letter-spacing:-0.031px;-webkit-text-stroke:0.3px #d0d6dd;">used</span>
<span class="t" style="left:108.07px;top:560.80px;font-size:16px;line-height:16px;color:#c7d0d9;letter-spacing:-0.067px;-webkit-text-stroke:0.3px #c7d0d9;">Max: 75 MiB</span>
<span class="t" style="left:204.55px;top:560.80px;font-size:16px;line-height:16px;color:#c7d0d9;letter-spacing:-0.125px;-webkit-text-stroke:0.3px #c7d0d9;">Current: 67 MiB</span>
<div class="sw" style="left:332.02px;top:569.10px;width:14.00px;height:2.00px;background:#D8B250;"></div>
<span class="t" style="left:354.92px;top:560.80px;font-size:16px;line-height:16px;color:#d0d6dd;letter-spacing:0.398px;-webkit-text-stroke:0.3px #d0d6dd;">committed</span>
<span class="t" style="left:439.90px;top:560.80px;font-size:16px;line-height:16px;color:#c7d0d9;letter-spacing:0.144px;-webkit-text-stroke:0.3px #c7d0d9;">Max: 111 MiB</span>
<span class="t" style="left:545.37px;top:560.80px;font-size:16px;line-height:16px;color:#c7d0d9;letter-spacing:0.037px;-webkit-text-stroke:0.3px #c7d0d9;">Current: 111 MiB</span>
<div class="sw" style="left:43.00px;top:596.70px;width:14.00px;height:2.00px;background:#80C4D4;"></div>
<span class="t" style="left:65.90px;top:588.80px;font-size:16px;line-height:16px;color:#d0d6dd;letter-spacing:0.143px;-webkit-text-stroke:0.3px #d0d6dd;">max</span>
<span class="t" style="left:104.16px;top:588.80px;font-size:16px;line-height:16px;color:#c7d0d9;letter-spacing:-0.054px;-webkit-text-stroke:0.3px #c7d0d9;">Max: 948 MiB</span>
<span class="t" style="left:209.62px;top:588.80px;font-size:16px;line-height:16px;color:#c7d0d9;letter-spacing:-0.111px;-webkit-text-stroke:0.3px #c7d0d9;">Current: 946 MiB</span>
<svg class="ic" style="left:683px;top:611px" width="8" height="8" viewBox="0 0 8 8"><path d="M6.2 0.8V6.2H0.8" fill="none" stroke="#7b7873" stroke-width="1.6"/></svg>
<div class="panel" style="left:706.00px;top:278.00px;width:680.00px;height:344.00px;"></div>
<span class="t" style="left:970.92px;top:289.47px;font-size:18.67px;line-height:18.67px;color:#ced4dd;letter-spacing:-0.107px;-webkit-text-stroke:1.15px #ced4dd;">JVM Non-Heap</span>
<svg class="ic" style="left:784px;top:338px" width="572" height="183" viewBox="784 338 572 183"><polygon points="786.0,516.4 786.0,361.2 1351.1,361.2 1351.1,516.4" fill="#80C4D4" fill-opacity="0.1"/><polygon points="786.0,516.4 786.0,511.8 1213.2,511.6 1215.6,513.5 1221.5,511.8 1330.1,511.5 1351.1,511.4 1351.1,516.4" fill="#85A870" fill-opacity="0.1"/><polygon points="786.0,516.4 786.0,511.0 1213.2,510.8 1215.6,512.7 1221.5,511.0 1330.1,510.7 1351.1,510.6 1351.1,516.4" fill="#D8B250" fill-opacity="0.1"/><path d="M786.0 340.40H1352.6 M786.0 399.07H1352.6 M786.0 457.73H1352.6 M786.0 516.40H1352.6" stroke="rgba(204,204,210,0.2)" stroke-width="1.33" fill="none"/><path d="M822.50 340.4V516.4 M916.93 340.4V516.4 M1011.37 340.4V516.4 M1105.80 340.4V516.4 M1200.23 340.4V516.4 M1294.67 340.4V516.4" stroke="rgba(204,204,210,0.2)" stroke-width="1.33" fill="none"/><polyline points="786.0,361.2 1351.1,361.2" fill="none" stroke="#80C4D4" stroke-width="1.3" stroke-linejoin="round"/><polyline points="786.0,511.8 1213.2,511.6 1215.6,513.5 1221.5,511.8 1330.1,511.5 1351.1,511.4" fill="none" stroke="#85A870" stroke-width="1.2" stroke-linejoin="round"/><polyline points="786.0,511.0 1213.2,510.8 1215.6,512.7 1221.5,511.0 1330.1,510.7 1351.1,510.6" fill="none" stroke="#D8B250" stroke-width="1.3" stroke-linejoin="round"/><path d="M1107.83 340.4V516.4" stroke="rgba(150,28,24,0.85)" stroke-width="1.5"/></svg>
<span class="t" style="left:727.04px;top:330.95px;font-size:15.7px;line-height:15.7px;color:#c7d0d9;letter-spacing:-0.211px;-webkit-text-stroke:0.3px #c7d0d9;">1.4 GiB</span>
<span class="t" style="left:719.62px;top:389.95px;font-size:15.7px;line-height:15.7px;color:#c7d0d9;letter-spacing:0.162px;-webkit-text-stroke:0.3px #c7d0d9;">954 MiB</span>
<span class="t" style="left:719.62px;top:447.95px;font-size:15.7px;line-height:15.7px;color:#c7d0d9;letter-spacing:0.162px;-webkit-text-stroke:0.3px #c7d0d9;">477 MiB</span>
<span class="t" style="left:755.02px;top:506.95px;font-size:15.7px;line-height:15.7px;color:#c7d0d9;letter-spacing:-0.220px;-webkit-text-stroke:0.3px #c7d0d9;">0 B</span>
<span class="t" style="left:802.19px;top:524.95px;font-size:15.7px;line-height:15.7px;color:#c7d0d9;letter-spacing:0.105px;-webkit-text-stroke:0.3px #c7d0d9;">00:00</span>
<span class="t" style="left:896.63px;top:524.95px;font-size:15.7px;line-height:15.7px;color:#c7d0d9;letter-spacing:0.105px;-webkit-text-stroke:0.3px #c7d0d9;">04:00</span>
<span class="t" style="left:991.06px;top:524.95px;font-size:15.7px;line-height:15.7px;color:#c7d0d9;letter-spacing:0.105px;-webkit-text-stroke:0.3px #c7d0d9;">08:00</span>
<span class="t" style="left:1085.49px;top:524.95px;font-size:15.7px;line-height:15.7px;color:#c7d0d9;letter-spacing:0.105px;-webkit-text-stroke:0.3px #c7d0d9;">12:00</span>
<span class="t" style="left:1179.93px;top:524.95px;font-size:15.7px;line-height:15.7px;color:#c7d0d9;letter-spacing:0.105px;-webkit-text-stroke:0.3px #c7d0d9;">16:00</span>
<span class="t" style="left:1274.36px;top:524.95px;font-size:15.7px;line-height:15.7px;color:#c7d0d9;letter-spacing:0.105px;-webkit-text-stroke:0.3px #c7d0d9;">20:00</span>
<div class="sw" style="left:735.00px;top:569.10px;width:14.00px;height:2.00px;background:#85A870;"></div>
<span class="t" style="left:757.90px;top:560.80px;font-size:16px;line-height:16px;color:#d0d6dd;letter-spacing:-0.031px;-webkit-text-stroke:0.3px #d0d6dd;">used</span>
<span class="t" style="left:800.07px;top:560.80px;font-size:16px;line-height:16px;color:#c7d0d9;letter-spacing:-0.067px;-webkit-text-stroke:0.3px #c7d0d9;">Max: 45 MiB</span>
<span class="t" style="left:896.55px;top:560.80px;font-size:16px;line-height:16px;color:#c7d0d9;letter-spacing:-0.125px;-webkit-text-stroke:0.3px #c7d0d9;">Current: 45 MiB</span>
<div class="sw" style="left:1024.02px;top:569.10px;width:14.00px;height:2.00px;background:#D8B250;"></div>
<span class="t" style="left:1046.92px;top:560.80px;font-size:16px;line-height:16px;color:#d0d6dd;letter-spacing:0.398px;-webkit-text-stroke:0.3px #d0d6dd;">committed</span>
<span class="t" style="left:1131.90px;top:560.80px;font-size:16px;line-height:16px;color:#c7d0d9;letter-spacing:-0.067px;-webkit-text-stroke:0.3px #c7d0d9;">Max: 47 MiB</span>
<span class="t" style="left:1228.38px;top:560.80px;font-size:16px;line-height:16px;color:#c7d0d9;letter-spacing:-0.125px;-webkit-text-stroke:0.3px #c7d0d9;">Current: 47 MiB</span>
<div class="sw" style="left:735.00px;top:596.70px;width:14.00px;height:2.00px;background:#80C4D4;"></div>
<span class="t" style="left:757.90px;top:588.80px;font-size:16px;line-height:16px;color:#d0d6dd;letter-spacing:0.143px;-webkit-text-stroke:0.3px #d0d6dd;">max</span>
<span class="t" style="left:796.16px;top:588.80px;font-size:16px;line-height:16px;color:#c7d0d9;letter-spacing:-0.213px;-webkit-text-stroke:0.3px #c7d0d9;">Max: 1.234 GiB</span>
<span class="t" style="left:911.75px;top:588.80px;font-size:16px;line-height:16px;color:#c7d0d9;letter-spacing:-0.229px;-webkit-text-stroke:0.3px #c7d0d9;">Current: 1.234 GiB</span>
<div class="panel" style="left:1398.00px;top:278.00px;width:679.00px;height:344.00px;"></div>
<span class="t" style="left:1683.27px;top:289.47px;font-size:18.67px;line-height:18.67px;color:#ced4dd;letter-spacing:0.450px;-webkit-text-stroke:1.15px #ced4dd;">JVM Total</span>
<svg class="ic" style="left:1476px;top:338px" width="572" height="155" viewBox="1476 338 572 155"><polygon points="1478.0,488.3 1478.0,351.1 1906.2,351.1 1910.9,351.7 2042.8,351.4 2042.8,488.3" fill="#80C4D4" fill-opacity="0.1"/><polygon points="1478.0,488.3 1478.0,481.7 1790.6,481.7 1795.3,481.4 1906.2,481.4 1909.7,479.0 1922.7,480.4 2010.0,480.6 2012.4,479.0 2042.8,478.1 2042.8,488.3" fill="#D8B250" fill-opacity="0.1"/><polygon points="1478.0,488.3 1478.0,483.9 1479.9,483.7 1481.8,483.9 1483.7,483.2 1485.6,483.4 1487.4,483.8 1489.3,483.5 1491.2,483.0 1493.1,483.9 1495.0,483.1 1496.9,483.5 1498.8,483.5 1500.7,483.1 1502.5,483.6 1504.4,483.5 1506.3,483.3 1508.2,483.0 1510.1,483.6 1512.0,483.1 1513.9,483.3 1515.8,483.3 1517.6,483.6 1519.5,483.6 1521.4,483.9 1523.3,483.8 1525.2,483.9 1527.1,483.2 1529.0,483.7 1530.9,483.8 1532.7,483.9 1534.6,483.1 1536.5,483.1 1538.4,483.3 1540.3,483.7 1542.2,483.7 1544.1,483.7 1546.0,483.5 1547.8,483.8 1549.7,483.5 1551.6,483.7 1553.5,483.0 1555.4,483.0 1557.3,483.4 1559.2,483.7 1561.1,483.0 1562.9,483.7 1564.8,483.6 1566.7,484.0 1568.6,483.6 1570.5,483.5 1572.4,483.5 1574.3,483.8 1576.2,483.5 1578.0,484.0 1579.9,483.7 1581.8,483.9 1583.7,483.6 1585.6,483.9 1587.5,483.9 1589.4,483.7 1591.3,483.7 1593.1,483.4 1595.0,483.4 1596.9,483.2 1598.8,483.3 1600.7,483.2 1602.6,483.1 1604.5,483.6 1606.4,483.6 1608.2,483.0 1610.1,483.8 1612.0,483.2 1613.9,483.3 1615.8,483.9 1617.7,483.1 1619.6,483.1 1621.5,483.3 1623.4,483.2 1625.2,483.2 1627.1,483.8 1629.0,483.4 1630.9,483.5 1632.8,483.1 1634.7,483.2 1636.6,483.1 1638.5,483.4 1640.3,483.1 1642.2,483.3 1644.1,483.3 1646.0,483.7 1647.9,483.9 1649.8,483.8 1651.7,483.6 1653.6,483.9 1655.4,483.1 1657.3,483.4 1659.2,483.3 1661.1,483.3 1663.0,483.3 1664.9,483.5 1666.8,484.0 1668.7,483.2 1670.5,483.2 1672.4,483.5 1674.3,483.4 1676.2,483.3 1678.1,483.9 1680.0,483.2 1681.9,483.7 1683.8,483.9 1685.6,483.7 1687.5,483.2 1689.4,483.8 1691.3,483.2 1693.2,483.0 1695.1,483.5 1697.0,483.6 1698.9,483.5 1700.7,483.3 1702.6,483.2 1704.5,483.3 1706.4,483.3 1708.3,483.9 1710.2,483.8 1712.1,483.7 1714.0,483.2 1715.8,483.7 1717.7,483.4 1719.6,483.9 1721.5,483.9 1723.4,483.7 1725.3,483.3 1727.2,483.3 1729.1,483.3 1730.9,483.7 1732.8,483.4 1734.7,483.5 1736.6,483.5 1738.5,483.8 1740.4,483.1 1742.3,483.8 1744.2,483.0 1746.0,483.0 1747.9,483.9 1749.8,483.5 1751.7,483.1 1753.6,483.0 1755.5,483.5 1757.4,483.7 1759.3,483.8 1761.2,483.0 1763.0,483.8 1764.9,483.4 1766.8,483.8 1768.7,483.4 1770.6,483.0 1772.5,483.8 1774.4,483.1 1776.3,483.5 1778.1,483.1 1780.0,483.3 1781.9,483.7 1783.8,483.1 1785.7,483.5 1787.6,483.9 1789.5,484.0 1791.4,483.5 1793.2,483.1 1795.1,483.3 1797.0,483.4 1798.9,483.2 1800.8,483.3 1802.7,482.8 1804.6,483.6 1806.5,482.8 1808.3,482.8 1810.2,483.5 1812.1,482.7 1814.0,482.9 1815.9,482.7 1817.8,483.3 1819.7,483.2 1821.6,483.2 1823.4,482.6 1825.3,483.0 1827.2,483.2 1829.1,483.2 1831.0,483.3 1832.9,483.5 1834.8,483.5 1836.7,482.8 1838.5,483.3 1840.4,482.7 1842.3,483.3 1844.2,483.3 1846.1,483.1 1848.0,483.4 1849.9,483.2 1851.8,482.6 1853.6,482.7 1855.5,482.8 1857.4,483.0 1859.3,482.7 1861.2,482.7 1863.1,483.0 1865.0,482.9 1866.9,483.5 1868.7,482.9 1870.6,483.1 1872.5,482.8 1874.4,482.9 1876.3,483.3 1878.2,483.5 1880.1,482.7 1882.0,483.5 1883.8,483.1 1885.7,483.2 1887.6,483.3 1889.5,482.9 1891.4,482.6 1893.3,483.3 1895.2,482.9 1897.1,483.3 1898.9,483.0 1900.8,483.2 1902.7,483.4 1904.6,483.4 1906.5,480.3 1908.4,480.7 1910.3,479.5 1912.2,480.8 1914.1,481.1 1915.9,481.0 1917.8,480.9 1919.7,480.0 1921.6,481.8 1923.5,482.0 1925.4,482.3 1927.3,482.6 1929.2,481.9 1931.0,481.8 1932.9,481.9 1934.8,482.5 1936.7,482.1 1938.6,481.2 1940.5,482.1 1942.4,482.2 1944.3,481.6 1946.1,482.4 1948.0,481.7 1949.9,481.3 1951.8,481.8 1953.7,482.7 1955.6,481.8 1957.5,481.3 1959.4,481.6 1961.2,482.0 1963.1,482.2 1965.0,481.8 1966.9,482.0 1968.8,482.6 1970.7,481.6 1972.6,482.8 1974.5,481.9 1976.3,482.4 1978.2,482.4 1980.1,482.2 1982.0,481.4 1983.9,481.6 1985.8,482.5 1987.7,481.3 1989.6,482.6 1991.4,481.8 1993.3,482.3 1995.2,481.4 1997.1,482.7 1999.0,482.2 2000.9,482.1 2002.8,481.4 2004.7,482.3 2006.5,481.7 2008.4,481.9 2010.3,481.1 2012.2,480.8 2014.1,481.4 2016.0,481.4 2017.9,480.4 2019.8,481.5 2021.6,480.9 2023.5,481.8 2025.4,481.6 2027.3,480.3 2029.2,480.3 2031.1,480.8 2033.0,480.9 2034.9,481.3 2036.7,481.0 2038.6,481.3 2040.5,481.9 2042.4,481.4 2042.8,481.0 2042.8,488.3" fill="#85A870" fill-opacity="0.1"/><path d="M1478.0 340.40H2044.3 M1478.0 369.98H2044.3 M1478.0 399.56H2044.3 M1478.0 429.14H2044.3 M1478.0 458.72H2044.3 M1478.0 488.30H2044.3" stroke="rgba(204,204,210,0.2)" stroke-width="1.33" fill="none"/><path d="M1514.48 340.4V488.3 M1608.86 340.4V488.3 M1703.25 340.4V488.3 M1797.63 340.4V488.3 M1892.01 340.4V488.3 M1986.40 340.4V488.3" stroke="rgba(204,204,210,0.2)" stroke-width="1.33" fill="none"/><polyline points="1478.0,351.1 1906.2,351.1 1910.9,351.7 2042.8,351.4" fill="none" stroke="#80C4D4" stroke-width="1.3" stroke-linejoin="round"/><polyline points="1478.0,481.7 1790.6,481.7 1795.3,481.4 1906.2,481.4 1909.7,479.0 1922.7,480.4 2010.0,480.6 2012.4,479.0 2042.8,478.1" fill="none" stroke="#D8B250" stroke-width="1.3" stroke-linejoin="round"/><polyline points="1478.0,483.9 1479.9,483.7 1481.8,483.9 1483.7,483.2 1485.6,483.4 1487.4,483.8 1489.3,483.5 1491.2,483.0 1493.1,483.9 1495.0,483.1 1496.9,483.5 1498.8,483.5 1500.7,483.1 1502.5,483.6 1504.4,483.5 1506.3,483.3 1508.2,483.0 1510.1,483.6 1512.0,483.1 1513.9,483.3 1515.8,483.3 1517.6,483.6 1519.5,483.6 1521.4,483.9 1523.3,483.8 1525.2,483.9 1527.1,483.2 1529.0,483.7 1530.9,483.8 1532.7,483.9 1534.6,483.1 1536.5,483.1 1538.4,483.3 1540.3,483.7 1542.2,483.7 1544.1,483.7 1546.0,483.5 1547.8,483.8 1549.7,483.5 1551.6,483.7 1553.5,483.0 1555.4,483.0 1557.3,483.4 1559.2,483.7 1561.1,483.0 1562.9,483.7 1564.8,483.6 1566.7,484.0 1568.6,483.6 1570.5,483.5 1572.4,483.5 1574.3,483.8 1576.2,483.5 1578.0,484.0 1579.9,483.7 1581.8,483.9 1583.7,483.6 1585.6,483.9 1587.5,483.9 1589.4,483.7 1591.3,483.7 1593.1,483.4 1595.0,483.4 1596.9,483.2 1598.8,483.3 1600.7,483.2 1602.6,483.1 1604.5,483.6 1606.4,483.6 1608.2,483.0 1610.1,483.8 1612.0,483.2 1613.9,483.3 1615.8,483.9 1617.7,483.1 1619.6,483.1 1621.5,483.3 1623.4,483.2 1625.2,483.2 1627.1,483.8 1629.0,483.4 1630.9,483.5 1632.8,483.1 1634.7,483.2 1636.6,483.1 1638.5,483.4 1640.3,483.1 1642.2,483.3 1644.1,483.3 1646.0,483.7 1647.9,483.9 1649.8,483.8 1651.7,483.6 1653.6,483.9 1655.4,483.1 1657.3,483.4 1659.2,483.3 1661.1,483.3 1663.0,483.3 1664.9,483.5 1666.8,484.0 1668.7,483.2 1670.5,483.2 1672.4,483.5 1674.3,483.4 1676.2,483.3 1678.1,483.9 1680.0,483.2 1681.9,483.7 1683.8,483.9 1685.6,483.7 1687.5,483.2 1689.4,483.8 1691.3,483.2 1693.2,483.0 1695.1,483.5 1697.0,483.6 1698.9,483.5 1700.7,483.3 1702.6,483.2 1704.5,483.3 1706.4,483.3 1708.3,483.9 1710.2,483.8 1712.1,483.7 1714.0,483.2 1715.8,483.7 1717.7,483.4 1719.6,483.9 1721.5,483.9 1723.4,483.7 1725.3,483.3 1727.2,483.3 1729.1,483.3 1730.9,483.7 1732.8,483.4 1734.7,483.5 1736.6,483.5 1738.5,483.8 1740.4,483.1 1742.3,483.8 1744.2,483.0 1746.0,483.0 1747.9,483.9 1749.8,483.5 1751.7,483.1 1753.6,483.0 1755.5,483.5 1757.4,483.7 1759.3,483.8 1761.2,483.0 1763.0,483.8 1764.9,483.4 1766.8,483.8 1768.7,483.4 1770.6,483.0 1772.5,483.8 1774.4,483.1 1776.3,483.5 1778.1,483.1 1780.0,483.3 1781.9,483.7 1783.8,483.1 1785.7,483.5 1787.6,483.9 1789.5,484.0 1791.4,483.5 1793.2,483.1 1795.1,483.3 1797.0,483.4 1798.9,483.2 1800.8,483.3 1802.7,482.8 1804.6,483.6 1806.5,482.8 1808.3,482.8 1810.2,483.5 1812.1,482.7 1814.0,482.9 1815.9,482.7 1817.8,483.3 1819.7,483.2 1821.6,483.2 1823.4,482.6 1825.3,483.0 1827.2,483.2 1829.1,483.2 1831.0,483.3 1832.9,483.5 1834.8,483.5 1836.7,482.8 1838.5,483.3 1840.4,482.7 1842.3,483.3 1844.2,483.3 1846.1,483.1 1848.0,483.4 1849.9,483.2 1851.8,482.6 1853.6,482.7 1855.5,482.8 1857.4,483.0 1859.3,482.7 1861.2,482.7 1863.1,483.0 1865.0,482.9 1866.9,483.5 1868.7,482.9 1870.6,483.1 1872.5,482.8 1874.4,482.9 1876.3,483.3 1878.2,483.5 1880.1,482.7 1882.0,483.5 1883.8,483.1 1885.7,483.2 1887.6,483.3 1889.5,482.9 1891.4,482.6 1893.3,483.3 1895.2,482.9 1897.1,483.3 1898.9,483.0 1900.8,483.2 1902.7,483.4 1904.6,483.4 1906.5,480.3 1908.4,480.7 1910.3,479.5 1912.2,480.8 1914.1,481.1 1915.9,481.0 1917.8,480.9 1919.7,480.0 1921.6,481.8 1923.5,482.0 1925.4,482.3 1927.3,482.6 1929.2,481.9 1931.0,481.8 1932.9,481.9 1934.8,482.5 1936.7,482.1 1938.6,481.2 1940.5,482.1 1942.4,482.2 1944.3,481.6 1946.1,482.4 1948.0,481.7 1949.9,481.3 1951.8,481.8 1953.7,482.7 1955.6,481.8 1957.5,481.3 1959.4,481.6 1961.2,482.0 1963.1,482.2 1965.0,481.8 1966.9,482.0 1968.8,482.6 1970.7,481.6 1972.6,482.8 1974.5,481.9 1976.3,482.4 1978.2,482.4 1980.1,482.2 1982.0,481.4 1983.9,481.6 1985.8,482.5 1987.7,481.3 1989.6,482.6 1991.4,481.8 1993.3,482.3 1995.2,481.4 1997.1,482.7 1999.0,482.2 2000.9,482.1 2002.8,481.4 2004.7,482.3 2006.5,481.7 2008.4,481.9 2010.3,481.1 2012.2,480.8 2014.1,481.4 2016.0,481.4 2017.9,480.4 2019.8,481.5 2021.6,480.9 2023.5,481.8 2025.4,481.6 2027.3,480.3 2029.2,480.3 2031.1,480.8 2033.0,480.9 2034.9,481.3 2036.7,481.0 2038.6,481.3 2040.5,481.9 2042.4,481.4 2042.8,481.0" fill="none" stroke="#85A870" stroke-width="1.2" stroke-linejoin="round"/><path d="M1799.66 340.4V488.3" stroke="rgba(150,28,24,0.85)" stroke-width="1.5"/></svg>
<span class="t" style="left:1419.04px;top:330.95px;font-size:15.7px;line-height:15.7px;color:#c7d0d9;letter-spacing:-0.211px;-webkit-text-stroke:0.3px #c7d0d9;">2.3 GiB</span>
<span class="t" style="left:1419.04px;top:359.95px;font-size:15.7px;line-height:15.7px;color:#c7d0d9;letter-spacing:-0.211px;-webkit-text-stroke:0.3px #c7d0d9;">1.9 GiB</span>
<span class="t" style="left:1419.04px;top:389.95px;font-size:15.7px;line-height:15.7px;color:#c7d0d9;letter-spacing:-0.211px;-webkit-text-stroke:0.3px #c7d0d9;">1.4 GiB</span>
<span class="t" style="left:1411.62px;top:419.95px;font-size:15.7px;line-height:15.7px;color:#c7d0d9;letter-spacing:0.162px;-webkit-text-stroke:0.3px #c7d0d9;">954 MiB</span>
<span class="t" style="left:1411.62px;top:448.95px;font-size:15.7px;line-height:15.7px;color:#c7d0d9;letter-spacing:0.162px;-webkit-text-stroke:0.3px #c7d0d9;">477 MiB</span>
<span class="t" style="left:1447.02px;top:478.95px;font-size:15.7px;line-height:15.7px;color:#c7d0d9;letter-spacing:-0.220px;-webkit-text-stroke:0.3px #c7d0d9;">0 B</span>
<span class="t" style="left:1494.17px;top:496.95px;font-size:15.7px;line-height:15.7px;color:#c7d0d9;letter-spacing:0.105px;-webkit-text-stroke:0.3px #c7d0d9;">00:00</span>
<span class="t" style="left:1588.56px;top:496.95px;font-size:15.7px;line-height:15.7px;color:#c7d0d9;letter-spacing:0.105px;-webkit-text-stroke:0.3px #c7d0d9;">04:00</span>
<span class="t" style="left:1682.94px;top:496.95px;font-size:15.7px;line-height:15.7px;color:#c7d0d9;letter-spacing:0.105px;-webkit-text-stroke:0.3px #c7d0d9;">08:00</span>
<span class="t" style="left:1777.32px;top:496.95px;font-size:15.7px;line-height:15.7px;color:#c7d0d9;letter-spacing:0.105px;-webkit-text-stroke:0.3px #c7d0d9;">12:00</span>
<span class="t" style="left:1871.71px;top:496.95px;font-size:15.7px;line-height:15.7px;color:#c7d0d9;letter-spacing:0.105px;-webkit-text-stroke:0.3px #c7d0d9;">16:00</span>
<span class="t" style="left:1966.09px;top:496.95px;font-size:15.7px;line-height:15.7px;color:#c7d0d9;letter-spacing:0.105px;-webkit-text-stroke:0.3px #c7d0d9;">20:00</span>
<div class="sw" style="left:1427.00px;top:540.70px;width:14.00px;height:2.00px;background:#85A870;"></div>
<span class="t" style="left:1449.90px;top:532.80px;font-size:16px;line-height:16px;color:#d0d6dd;letter-spacing:-0.031px;-webkit-text-stroke:0.3px #d0d6dd;">used</span>
<span class="t" style="left:1492.07px;top:532.80px;font-size:16px;line-height:16px;color:#c7d0d9;letter-spacing:0.045px;-webkit-text-stroke:0.3px #c7d0d9;">Max: 116 MiB</span>
<span class="t" style="left:1597.53px;top:532.80px;font-size:16px;line-height:16px;color:#c7d0d9;letter-spacing:-0.037px;-webkit-text-stroke:0.3px #c7d0d9;">Current: 112 MiB</span>
<div class="sw" style="left:1427.00px;top:569.10px;width:14.00px;height:2.00px;background:#D8B250;"></div>
<span class="t" style="left:1449.90px;top:560.80px;font-size:16px;line-height:16px;color:#d0d6dd;letter-spacing:0.398px;-webkit-text-stroke:0.3px #d0d6dd;">committed</span>
<span class="t" style="left:1534.88px;top:560.80px;font-size:16px;line-height:16px;color:#c7d0d9;letter-spacing:-0.054px;-webkit-text-stroke:0.3px #c7d0d9;">Max: 158 MiB</span>
<span class="t" style="left:1640.35px;top:560.80px;font-size:16px;line-height:16px;color:#c7d0d9;letter-spacing:-0.111px;-webkit-text-stroke:0.3px #c7d0d9;">Current: 158 MiB</span>
<div class="sw" style="left:1427.00px;top:596.70px;width:14.00px;height:2.00px;background:#80C4D4;"></div>
<span class="t" style="left:1449.90px;top:588.80px;font-size:16px;line-height:16px;color:#d0d6dd;letter-spacing:0.143px;-webkit-text-stroke:0.3px #d0d6dd;">max</span>
<span class="t" style="left:1488.16px;top:588.80px;font-size:16px;line-height:16px;color:#c7d0d9;letter-spacing:-0.213px;-webkit-text-stroke:0.3px #c7d0d9;">Max: 2.160 GiB</span>
<span class="t" style="left:1603.75px;top:588.80px;font-size:16px;line-height:16px;color:#c7d0d9;letter-spacing:-0.229px;-webkit-text-stroke:0.3px #c7d0d9;">Current: 2.158 GiB</span>
<div class="panel" style="left:14.00px;top:684.00px;width:680.00px;height:344.00px;"></div>
<span class="t" style="left:295.03px;top:694.46px;font-size:18.67px;line-height:18.67px;color:#ced4dd;letter-spacing:-0.629px;-webkit-text-stroke:1.15px #ced4dd;">CPU Usage</span>
<svg class="ic" style="left:83px;top:744px" width="581" height="182" viewBox="83 744 581 182"><path d="M85.8 746.00H660.5 M85.8 781.06H660.5 M85.8 816.12H660.5 M85.8 851.18H660.5 M85.8 886.24H660.5 M85.8 921.30H660.5" stroke="rgba(204,204,210,0.2)" stroke-width="1.33" fill="none"/><path d="M122.82 746.0V921.3 M218.60 746.0V921.3 M314.39 746.0V921.3 M410.17 746.0V921.3 M505.95 746.0V921.3 M601.74 746.0V921.3" stroke="rgba(204,204,210,0.2)" stroke-width="1.33" fill="none"/><polyline points="85.8,920.4 87.0,920.2 89.8,920.5 92.6,920.5 95.4,920.3 98.2,920.3 101.0,920.4 103.8,920.6 106.6,920.4 109.4,920.5 112.1,920.2 114.9,920.5 117.7,920.5 120.5,920.2 123.3,920.6 126.1,920.4 128.9,920.3 131.7,920.3 134.5,920.6 137.3,920.6 140.1,920.6 142.9,920.2 145.7,920.5 148.5,920.3 151.3,920.2 154.1,920.5 156.9,920.5 159.7,920.2 162.5,920.4 165.3,920.5 168.1,920.3 170.8,920.5 173.2,919.6 174.6,919.9 176.0,919.1 177.4,919.0 178.8,919.3 180.2,919.0 181.6,919.9 183.0,919.7 184.4,919.4 185.8,918.9 187.2,918.9 188.5,919.5 189.9,919.6 191.3,919.5 192.7,919.4 194.1,919.0 195.5,919.7 196.9,919.1 198.3,919.2 199.7,919.1 201.1,919.1 202.5,919.3 203.9,919.6 205.3,919.6 206.7,919.5 208.1,919.1 209.5,919.8 210.9,919.7 212.3,919.1 213.7,919.7 215.1,919.8 216.5,919.9 217.9,919.3 219.3,919.6 220.7,918.9 222.1,919.0 223.5,918.9 224.9,919.6 226.3,919.8 227.7,919.8 229.1,919.4 230.5,919.2 231.9,919.5 233.3,919.7 234.7,919.5 236.1,919.3 237.5,919.2 238.9,919.2 240.3,919.1 241.7,919.2 243.1,919.8 244.5,919.1 245.9,919.6 247.2,919.3 248.6,919.5 250.0,919.2 251.4,919.7 252.8,919.7 254.2,919.7 255.6,919.7 257.0,919.0 258.4,919.3 259.8,919.6 261.2,919.5 262.6,918.9 264.0,919.4 265.4,919.7 266.8,919.1 268.2,919.2 269.6,918.9 271.0,919.8 272.4,919.4 273.8,919.1 275.2,919.1 276.6,919.0 278.0,919.9 279.4,919.6 280.8,919.8 282.2,919.7 283.6,918.9 285.0,919.3 286.4,919.0 287.8,919.5 289.2,919.0 290.6,919.5 292.0,919.6 293.4,919.1 294.8,919.0 296.2,919.8 297.6,919.3 299.0,919.3 300.4,919.7 301.8,919.5 303.2,919.8 304.6,919.7 305.9,919.6 307.3,919.3 308.7,919.2 310.1,919.7 311.5,919.9 312.9,919.6 314.3,919.2 315.7,919.7 317.1,919.6 318.5,919.7 319.9,918.1 320.9,918.8 321.8,920.4 322.7,920.3 323.7,919.3 324.6,918.8 325.5,918.6 326.4,920.3 327.4,920.1 328.3,918.4 329.2,919.3 330.2,919.7 331.1,919.6 332.0,917.5 333.0,919.6 333.9,918.8 334.8,919.5 335.8,919.3 336.7,917.8 337.6,917.4 338.6,919.4 339.5,920.0 340.4,918.3 341.4,919.9 342.3,920.6 343.2,917.7 344.2,919.2 345.1,918.0 346.0,919.3 346.9,917.8 347.9,919.1 348.8,920.1 349.7,920.6 350.7,918.8 351.6,918.5 352.5,917.7 353.5,920.3 354.4,918.6 355.3,919.4 356.3,919.0 357.9,920.2 358.8,917.8 359.5,917.7 360.2,917.5 360.9,917.2 361.6,917.8 362.3,917.5 363.0,917.3 363.7,917.1 364.4,917.7 365.1,917.8 365.8,917.1 366.5,917.1 367.2,917.5 367.9,917.9 368.6,917.2 369.3,917.6 370.0,917.2 370.7,917.4 371.4,917.2 372.1,917.8 372.8,917.3 373.5,917.7 374.2,917.6 374.9,917.2 375.6,917.2 376.3,917.8 377.0,917.7 377.7,917.6 378.4,917.5 379.1,917.6 379.8,917.8 380.5,917.7 381.2,917.3 381.9,917.2 382.6,917.9 383.3,917.5 384.0,917.3 384.7,917.9 385.4,917.2 386.1,917.8 386.8,917.4 387.5,917.5 389.3,920.2 391.2,916.6 391.9,916.9 392.6,916.8 393.3,916.6 394.0,916.8 394.7,916.5 395.4,916.8 396.1,916.8 396.8,917.2 397.5,916.6 398.2,916.7 398.9,917.0 399.6,916.4 400.3,916.4 401.0,916.7 401.7,917.0 402.4,916.7 403.1,917.1 403.8,917.1 404.5,916.8 405.2,917.1 405.9,916.8 406.6,916.7 407.3,917.2 408.0,916.6 408.7,917.1 409.4,916.5 410.1,916.4 410.8,916.7 411.5,917.1 412.2,916.7 412.9,916.8 413.6,916.2 414.3,917.1 415.0,916.3 415.7,916.2 416.4,916.5 417.1,916.4 417.8,917.0 418.5,916.2 419.2,916.7 419.9,916.2 420.6,916.3 421.3,917.0 422.0,916.4 422.7,916.3 423.3,917.1 424.0,916.8 424.7,916.4 425.4,917.0 426.1,916.3 426.8,916.9 427.5,916.4 428.2,917.1 428.9,916.7 429.6,916.3 430.3,917.0 431.0,916.9 431.7,916.7 432.4,916.9 433.1,917.2 433.8,917.0 434.5,917.0 435.2,916.3 435.9,916.5 436.6,916.3 437.3,917.0 438.0,916.4 438.7,917.1 439.4,916.7 440.1,916.6 440.8,916.8 441.5,916.3 442.2,916.6 442.9,916.6 443.6,916.3 444.3,917.1 445.0,916.2 445.7,916.6 446.4,916.8 447.1,916.4 449.0,920.0 450.4,915.9 451.1,915.3 451.8,915.6 452.5,915.8 453.2,915.5 453.9,915.7 454.6,916.0 455.3,915.5 456.0,916.1 456.7,915.4 457.4,915.9 458.1,915.6 458.8,915.3 459.5,915.6 460.2,915.6 460.9,915.8 461.6,916.1 462.3,916.1 462.9,916.0 463.6,915.6 464.3,915.8 465.0,915.7 465.7,915.4 466.4,916.0 467.1,915.9 467.8,915.6 469.9,920.0 471.3,917.0 472.0,917.1 472.7,916.0 473.4,916.8 474.1,916.0 474.8,916.4 475.5,915.2 476.2,915.2 476.9,916.4 477.6,915.1 478.3,915.6 479.0,916.7 479.7,914.1 480.4,916.3 481.1,916.6 481.8,916.8 482.5,915.1 483.2,914.3 483.9,914.6 484.6,915.8 485.3,916.3 486.0,917.1 486.7,915.0 487.4,915.3 488.1,916.0 488.8,915.0 489.5,915.7 490.2,914.1 490.9,914.8 491.6,916.3 492.3,914.2 493.0,917.0 493.7,915.4 494.4,915.8 495.1,916.3 495.8,916.9 496.5,914.6 497.2,917.1 497.9,915.3 498.6,914.1 501.6,914.9 502.3,914.9 503.0,914.4 503.7,914.5 504.4,914.3 505.1,914.1 505.8,914.9 506.5,914.7 507.2,914.7 507.9,915.0 508.6,914.0 509.3,914.2 510.0,914.2 510.7,915.1 511.4,914.1 512.1,914.2 512.8,914.5 513.5,914.2 514.2,914.6 514.9,914.8 515.6,915.0 516.3,914.8 517.0,915.1 517.7,914.7 518.4,914.2 519.1,914.3 519.8,914.1 520.5,914.2 521.9,920.7 526.1,920.0 528.4,909.0 530.0,918.0 530.7,919.5 531.9,918.6 533.1,919.0 534.2,917.9 535.4,918.7 536.6,919.6 537.7,918.3 538.9,917.3 540.1,919.7 541.2,917.6 543.5,920.4 545.9,920.2 548.2,920.3 550.5,920.0 552.9,919.8 555.2,920.0 557.5,920.2 559.9,919.9 562.2,920.2 564.5,920.3 566.8,919.9 569.2,920.0 571.5,920.0 573.8,920.0 576.2,919.8 578.5,920.1 580.8,919.9 583.1,920.0 585.5,919.9 587.8,920.1 590.1,920.0 592.5,920.1 594.8,920.2 597.1,920.3 599.5,920.0 601.8,920.4 604.1,919.9 606.4,920.3 608.8,920.4 611.1,920.3 613.4,919.8 615.8,920.2 618.1,920.3 620.4,920.4 622.7,920.4 625.1,920.0 627.4,920.0 629.7,920.0 632.1,920.0 634.4,920.4 636.7,920.0 639.0,920.2 641.4,919.9 643.7,919.9 646.0,919.9 648.4,920.4 650.7,919.9 653.0,919.9 655.4,919.8 659.0,918.2 659.0,920.0" fill="none" stroke="#85A870" stroke-width="1.2" stroke-linejoin="round"/><polyline points="85.8,921.0 522.6,921.0 524.4,914.0 525.8,920.0 527.2,916.0 528.6,921.0 659.0,921.0" fill="none" stroke="#D8B250" stroke-width="1.3" stroke-linejoin="round"/><polyline points="85.8,921.2 659.0,921.2" fill="none" stroke="#80C4D4" stroke-width="1.8" stroke-linejoin="round"/><path d="M412.23 746.0V921.3" stroke="rgba(150,28,24,0.85)" stroke-width="1.5"/></svg>
<span class="t" style="left:26.85px;top:736.95px;font-size:15.7px;line-height:15.7px;color:#c7d0d9;letter-spacing:-0.230px;-webkit-text-stroke:0.3px #c7d0d9;">100.0%</span>
<span class="t" style="left:35.80px;top:771.95px;font-size:15.7px;line-height:15.7px;color:#c7d0d9;letter-spacing:-0.327px;-webkit-text-stroke:0.3px #c7d0d9;">80.0%</span>
<span class="t" style="left:35.80px;top:806.95px;font-size:15.7px;line-height:15.7px;color:#c7d0d9;letter-spacing:-0.327px;-webkit-text-stroke:0.3px #c7d0d9;">60.0%</span>
<span class="t" style="left:35.80px;top:841.95px;font-size:15.7px;line-height:15.7px;color:#c7d0d9;letter-spacing:-0.327px;-webkit-text-stroke:0.3px #c7d0d9;">40.0%</span>
<span class="t" style="left:35.80px;top:876.95px;font-size:15.7px;line-height:15.7px;color:#c7d0d9;letter-spacing:-0.327px;-webkit-text-stroke:0.3px #c7d0d9;">20.0%</span>
<span class="t" style="left:57.31px;top:911.95px;font-size:15.7px;line-height:15.7px;color:#c7d0d9;letter-spacing:-0.994px;-webkit-text-stroke:0.3px #c7d0d9;">0%</span>
<span class="t" style="left:102.51px;top:930.95px;font-size:15.7px;line-height:15.7px;color:#c7d0d9;letter-spacing:0.105px;-webkit-text-stroke:0.3px #c7d0d9;">00:00</span>
<span class="t" style="left:198.30px;top:930.95px;font-size:15.7px;line-height:15.7px;color:#c7d0d9;letter-spacing:0.105px;-webkit-text-stroke:0.3px #c7d0d9;">04:00</span>
<span class="t" style="left:294.08px;top:930.95px;font-size:15.7px;line-height:15.7px;color:#c7d0d9;letter-spacing:0.105px;-webkit-text-stroke:0.3px #c7d0d9;">08:00</span>
<span class="t" style="left:389.86px;top:930.95px;font-size:15.7px;line-height:15.7px;color:#c7d0d9;letter-spacing:0.105px;-webkit-text-stroke:0.3px #c7d0d9;">12:00</span>
<span class="t" style="left:485.65px;top:930.95px;font-size:15.7px;line-height:15.7px;color:#c7d0d9;letter-spacing:0.105px;-webkit-text-stroke:0.3px #c7d0d9;">16:00</span>
<span class="t" style="left:581.43px;top:930.95px;font-size:15.7px;line-height:15.7px;color:#c7d0d9;letter-spacing:0.105px;-webkit-text-stroke:0.3px #c7d0d9;">20:00</span>
<div class="sw" style="left:43.00px;top:974.90px;width:14.00px;height:2.00px;background:#85A870;"></div>
<span class="t" style="left:65.90px;top:966.80px;font-size:16px;line-height:16px;color:#d0d6dd;letter-spacing:0.187px;-webkit-text-stroke:0.3px #d0d6dd;">system</span>
<span class="t" style="left:125.30px;top:966.80px;font-size:16px;line-height:16px;color:#c7d0d9;letter-spacing:-0.316px;-webkit-text-stroke:0.3px #c7d0d9;">Max: 6.89%</span>
<span class="t" style="left:214.92px;top:966.80px;font-size:16px;line-height:16px;color:#c7d0d9;letter-spacing:-0.307px;-webkit-text-stroke:0.3px #c7d0d9;">Current: 2.23%</span>
<div class="sw" style="left:335.53px;top:974.90px;width:14.00px;height:2.00px;background:#D8B250;"></div>
<span class="t" style="left:358.43px;top:966.80px;font-size:16px;line-height:16px;color:#d0d6dd;letter-spacing:0.120px;-webkit-text-stroke:0.3px #d0d6dd;">process</span>
<span class="t" style="left:422.90px;top:966.80px;font-size:16px;line-height:16px;color:#c7d0d9;letter-spacing:-0.316px;-webkit-text-stroke:0.3px #c7d0d9;">Max: 3.91%</span>
<span class="t" style="left:512.52px;top:966.80px;font-size:16px;line-height:16px;color:#c7d0d9;letter-spacing:-0.307px;-webkit-text-stroke:0.3px #c7d0d9;">Current: 0.47%</span>
<div class="sw" style="left:43.00px;top:1002.90px;width:14.00px;height:2.00px;background:#80C4D4;"></div>
<span class="t" style="left:65.90px;top:994.80px;font-size:16px;line-height:16px;color:#d0d6dd;letter-spacing:-0.007px;-webkit-text-stroke:0.3px #d0d6dd;">process-1h</span>
<span class="t" style="left:152.58px;top:994.80px;font-size:16px;line-height:16px;color:#c7d0d9;letter-spacing:-0.316px;-webkit-text-stroke:0.3px #c7d0d9;">Max: 0.62%</span>
<span class="t" style="left:242.20px;top:994.80px;font-size:16px;line-height:16px;color:#c7d0d9;letter-spacing:-0.307px;-webkit-text-stroke:0.3px #c7d0d9;">Current: 0.50%</span>
<div class="panel" style="left:706.00px;top:684.00px;width:680.00px;height:344.00px;"></div>
<span class="t" style="left:1013.00px;top:694.46px;font-size:18.67px;line-height:18.67px;color:#ced4dd;letter-spacing:-0.039px;-webkit-text-stroke:1.15px #ced4dd;">Load</span>
<svg class="ic" style="left:746px;top:744px" width="610" height="210" viewBox="746 744 610 210"><polygon points="748.9,949.3 748.9,868.2 1351.1,868.2 1351.1,949.3" fill="#D8B250" fill-opacity="0.1"/><polygon points="748.9,949.3 748.9,949.0 750.3,949.0 751.8,949.0 753.2,949.0 754.6,949.0 756.1,949.0 757.5,949.0 759.0,949.0 760.4,949.0 761.8,949.0 763.3,946.2 764.7,943.5 766.1,949.0 767.6,942.6 769.0,949.0 770.5,940.1 771.9,945.9 773.3,940.9 774.8,942.6 776.2,949.0 777.6,949.0 779.1,945.3 780.5,949.0 782.0,949.0 783.4,949.0 784.8,949.0 786.3,949.0 787.7,949.0 789.1,949.0 790.6,949.0 792.0,949.0 793.5,949.0 794.9,949.0 796.3,949.0 797.8,949.0 799.2,949.0 800.6,949.0 802.1,943.7 803.5,949.0 805.0,949.0 806.4,949.0 807.8,949.0 809.3,949.0 810.7,937.4 812.1,949.0 813.6,949.0 815.0,949.0 816.5,944.5 817.9,940.1 819.3,945.9 820.8,946.0 822.2,949.0 823.6,949.0 825.1,946.5 826.5,947.5 828.0,949.0 829.4,949.0 830.8,949.0 832.3,949.0 833.7,949.0 835.1,949.0 836.6,949.0 838.0,949.0 839.5,945.6 840.9,949.0 842.3,949.0 843.8,949.0 845.2,949.0 846.6,949.0 848.1,949.0 849.5,949.0 851.0,949.0 852.4,949.0 853.8,949.0 855.3,942.6 856.7,946.4 858.1,949.0 859.6,949.0 861.0,947.4 862.5,944.7 863.9,944.6 865.3,949.0 866.8,949.0 868.2,949.0 869.6,949.0 871.1,949.0 872.5,949.0 874.0,947.0 875.4,949.0 876.8,949.0 878.3,946.8 879.7,949.0 881.1,949.0 882.6,942.8 884.0,949.0 885.5,949.0 886.9,949.0 888.3,947.6 889.8,949.0 891.2,944.1 892.6,943.4 894.1,949.0 895.5,946.9 897.0,949.0 898.4,946.6 899.8,949.0 901.3,949.0 902.7,949.0 904.1,942.9 905.6,947.7 907.0,945.4 908.4,946.9 909.9,949.0 911.3,949.0 912.8,945.9 914.2,949.0 915.6,949.0 917.1,949.0 918.5,949.0 919.9,949.0 921.4,947.6 922.8,938.7 924.3,949.0 925.7,940.0 927.1,949.0 928.6,949.0 930.0,949.0 931.4,944.9 932.9,949.0 934.3,949.0 935.8,949.0 937.2,949.0 938.6,949.0 940.1,949.0 941.5,949.0 942.9,949.0 944.4,936.8 945.8,944.7 947.3,949.0 948.7,949.0 950.1,949.0 951.6,949.0 953.0,949.0 954.4,949.0 955.9,949.0 957.3,949.0 958.8,944.4 960.2,949.0 961.6,949.0 963.1,949.0 964.5,949.0 965.9,949.0 967.4,949.0 968.8,949.0 970.3,949.0 971.7,943.8 973.1,940.0 974.6,944.1 976.0,940.9 977.4,946.2 978.9,949.0 980.3,947.7 981.8,949.0 983.2,949.0 984.6,946.9 986.1,949.0 987.5,949.0 988.9,949.0 990.4,949.0 991.8,949.0 993.3,949.0 994.7,945.5 996.1,949.0 997.6,949.0 999.0,949.0 1000.4,949.0 1001.9,949.0 1003.3,949.0 1004.8,945.2 1006.2,949.0 1007.6,949.0 1009.1,949.0 1010.5,949.0 1011.9,946.9 1013.4,949.0 1014.8,946.7 1016.3,949.0 1017.7,949.0 1019.1,949.0 1020.6,949.0 1022.0,949.0 1023.4,949.0 1024.9,949.0 1026.3,947.6 1027.8,949.0 1029.2,939.4 1030.6,943.6 1032.1,940.2 1033.5,941.5 1034.9,947.5 1036.4,949.0 1037.8,949.0 1039.3,949.0 1040.7,949.0 1042.1,940.1 1043.6,945.9 1045.0,949.0 1046.4,940.9 1047.9,946.2 1049.3,949.0 1050.8,949.0 1052.2,940.9 1053.6,944.1 1055.1,949.0 1056.5,949.0 1057.9,949.0 1059.4,943.6 1060.8,949.0 1062.2,942.9 1063.7,949.0 1065.1,945.4 1066.6,949.0 1068.0,949.0 1069.4,944.8 1070.9,949.0 1072.3,949.0 1073.7,949.0 1075.2,949.0 1076.6,949.0 1078.1,944.0 1079.5,949.0 1080.9,949.0 1082.4,937.6 1083.8,943.0 1085.2,938.5 1086.7,945.3 1088.1,949.0 1089.6,938.1 1091.0,943.0 1092.4,949.0 1093.9,947.3 1095.3,949.0 1096.7,949.0 1098.2,949.0 1099.6,949.0 1101.1,942.5 1102.5,949.0 1103.9,946.0 1105.4,949.0 1106.8,947.0 1108.2,949.0 1109.7,949.0 1111.1,949.0 1112.6,949.0 1114.0,949.0 1115.4,949.0 1116.9,949.0 1118.3,946.6 1119.7,932.8 1121.2,943.3 1122.6,949.0 1124.1,949.0 1125.5,949.0 1126.9,949.0 1128.4,934.8 1129.8,944.0 1131.2,949.0 1132.7,940.1 1134.1,945.9 1135.6,949.0 1137.0,949.0 1138.4,945.0 1139.9,949.0 1141.3,949.0 1142.7,939.8 1144.2,949.0 1145.6,949.0 1147.1,949.0 1148.5,949.0 1149.9,949.0 1151.4,940.4 1152.8,949.0 1154.2,949.0 1155.7,945.3 1157.1,945.5 1158.6,949.0 1160.0,949.0 1161.4,949.0 1162.9,946.8 1164.3,949.0 1165.7,949.0 1167.2,943.7 1168.6,941.5 1170.1,949.0 1171.5,945.9 1172.9,949.0 1174.4,943.9 1175.8,931.2 1177.2,942.8 1178.7,949.0 1180.1,949.0 1181.6,945.6 1183.0,949.0 1184.4,946.7 1185.9,949.0 1187.3,949.0 1188.7,949.0 1190.2,949.0 1191.6,949.0 1193.1,949.0 1194.5,943.9 1195.9,949.0 1197.4,949.0 1198.8,940.9 1200.2,946.2 1201.7,942.5 1203.1,949.0 1204.5,946.5 1206.0,937.6 1207.4,945.0 1208.9,949.0 1210.3,949.0 1211.7,949.0 1213.2,945.7 1214.6,949.0 1216.0,938.8 1217.5,949.0 1218.9,949.0 1220.4,945.1 1221.8,949.0 1223.2,949.0 1224.7,949.0 1226.1,947.4 1227.5,941.7 1229.0,946.4 1230.4,949.0 1231.9,949.0 1233.3,949.0 1234.7,949.0 1236.2,949.0 1237.6,949.0 1239.0,949.0 1240.5,949.0 1241.9,949.0 1243.4,942.8 1244.8,949.0 1246.2,949.0 1247.7,949.0 1249.1,949.0 1250.5,949.0 1252.0,949.0 1253.4,949.0 1254.9,937.8 1256.3,949.0 1257.7,949.0 1259.2,949.0 1260.6,949.0 1262.0,949.0 1263.5,949.0 1264.9,949.0 1266.4,943.1 1267.8,949.0 1269.2,949.0 1270.7,949.0 1272.1,949.0 1273.5,949.0 1275.0,949.0 1276.4,949.0 1277.9,949.0 1279.3,949.0 1280.7,949.0 1282.2,949.0 1283.6,949.0 1285.0,949.0 1286.5,949.0 1287.9,949.0 1289.4,949.0 1290.8,949.0 1291.8,948.6 1293.0,820.0 1293.7,771.0 1294.3,771.0 1295.2,850.0 1296.8,930.0 1298.6,948.6 1299.4,946.0 1300.9,949.0 1302.3,939.0 1303.7,949.0 1305.2,949.0 1306.6,949.0 1308.0,949.0 1309.5,949.0 1310.9,949.0 1312.4,949.0 1313.8,949.0 1315.2,949.0 1316.7,949.0 1318.1,949.0 1319.5,949.0 1321.0,949.0 1322.4,949.0 1323.9,944.5 1325.3,949.0 1326.7,949.0 1328.2,949.0 1329.6,946.8 1331.0,949.0 1332.5,949.0 1333.9,949.0 1335.4,949.0 1336.8,949.0 1338.2,949.0 1339.7,949.0 1341.1,949.0 1342.5,949.0 1344.0,949.0 1345.4,949.0 1346.9,944.6 1348.3,949.0 1349.7,942.9 1351.1,949.0 1351.1,949.0 1351.1,949.3" fill="#85A870" fill-opacity="0.1"/><path d="M748.9 746.60H1352.6 M748.9 787.14H1352.6 M748.9 827.68H1352.6 M748.9 868.22H1352.6 M748.9 908.76H1352.6 M748.9 949.30H1352.6" stroke="rgba(204,204,210,0.2)" stroke-width="1.33" fill="none"/><path d="M787.79 746.6V949.3 M888.41 746.6V949.3 M989.02 746.6V949.3 M1089.64 746.6V949.3 M1190.26 746.6V949.3 M1290.87 746.6V949.3" stroke="rgba(204,204,210,0.2)" stroke-width="1.33" fill="none"/><polyline points="748.9,868.2 1351.1,868.2" fill="none" stroke="#D8B250" stroke-width="1.3" stroke-linejoin="round"/><polyline points="748.9,949.0 750.3,949.0 751.8,949.0 753.2,949.0 754.6,949.0 756.1,949.0 757.5,949.0 759.0,949.0 760.4,949.0 761.8,949.0 763.3,946.2 764.7,943.5 766.1,949.0 767.6,942.6 769.0,949.0 770.5,940.1 771.9,945.9 773.3,940.9 774.8,942.6 776.2,949.0 777.6,949.0 779.1,945.3 780.5,949.0 782.0,949.0 783.4,949.0 784.8,949.0 786.3,949.0 787.7,949.0 789.1,949.0 790.6,949.0 792.0,949.0 793.5,949.0 794.9,949.0 796.3,949.0 797.8,949.0 799.2,949.0 800.6,949.0 802.1,943.7 803.5,949.0 805.0,949.0 806.4,949.0 807.8,949.0 809.3,949.0 810.7,937.4 812.1,949.0 813.6,949.0 815.0,949.0 816.5,944.5 817.9,940.1 819.3,945.9 820.8,946.0 822.2,949.0 823.6,949.0 825.1,946.5 826.5,947.5 828.0,949.0 829.4,949.0 830.8,949.0 832.3,949.0 833.7,949.0 835.1,949.0 836.6,949.0 838.0,949.0 839.5,945.6 840.9,949.0 842.3,949.0 843.8,949.0 845.2,949.0 846.6,949.0 848.1,949.0 849.5,949.0 851.0,949.0 852.4,949.0 853.8,949.0 855.3,942.6 856.7,946.4 858.1,949.0 859.6,949.0 861.0,947.4 862.5,944.7 863.9,944.6 865.3,949.0 866.8,949.0 868.2,949.0 869.6,949.0 871.1,949.0 872.5,949.0 874.0,947.0 875.4,949.0 876.8,949.0 878.3,946.8 879.7,949.0 881.1,949.0 882.6,942.8 884.0,949.0 885.5,949.0 886.9,949.0 888.3,947.6 889.8,949.0 891.2,944.1 892.6,943.4 894.1,949.0 895.5,946.9 897.0,949.0 898.4,946.6 899.8,949.0 901.3,949.0 902.7,949.0 904.1,942.9 905.6,947.7 907.0,945.4 908.4,946.9 909.9,949.0 911.3,949.0 912.8,945.9 914.2,949.0 915.6,949.0 917.1,949.0 918.5,949.0 919.9,949.0 921.4,947.6 922.8,938.7 924.3,949.0 925.7,940.0 927.1,949.0 928.6,949.0 930.0,949.0 931.4,944.9 932.9,949.0 934.3,949.0 935.8,949.0 937.2,949.0 938.6,949.0 940.1,949.0 941.5,949.0 942.9,949.0 944.4,936.8 945.8,944.7 947.3,949.0 948.7,949.0 950.1,949.0 951.6,949.0 953.0,949.0 954.4,949.0 955.9,949.0 957.3,949.0 958.8,944.4 960.2,949.0 961.6,949.0 963.1,949.0 964.5,949.0 965.9,949.0 967.4,949.0 968.8,949.0 970.3,949.0 971.7,943.8 973.1,940.0 974.6,944.1 976.0,940.9 977.4,946.2 978.9,949.0 980.3,947.7 981.8,949.0 983.2,949.0 984.6,946.9 986.1,949.0 987.5,949.0 988.9,949.0 990.4,949.0 991.8,949.0 993.3,949.0 994.7,945.5 996.1,949.0 997.6,949.0 999.0,949.0 1000.4,949.0 1001.9,949.0 1003.3,949.0 1004.8,945.2 1006.2,949.0 1007.6,949.0 1009.1,949.0 1010.5,949.0 1011.9,946.9 1013.4,949.0 1014.8,946.7 1016.3,949.0 1017.7,949.0 1019.1,949.0 1020.6,949.0 1022.0,949.0 1023.4,949.0 1024.9,949.0 1026.3,947.6 1027.8,949.0 1029.2,939.4 1030.6,943.6 1032.1,940.2 1033.5,941.5 1034.9,947.5 1036.4,949.0 1037.8,949.0 1039.3,949.0 1040.7,949.0 1042.1,940.1 1043.6,945.9 1045.0,949.0 1046.4,940.9 1047.9,946.2 1049.3,949.0 1050.8,949.0 1052.2,940.9 1053.6,944.1 1055.1,949.0 1056.5,949.0 1057.9,949.0 1059.4,943.6 1060.8,949.0 1062.2,942.9 1063.7,949.0 1065.1,945.4 1066.6,949.0 1068.0,949.0 1069.4,944.8 1070.9,949.0 1072.3,949.0 1073.7,949.0 1075.2,949.0 1076.6,949.0 1078.1,944.0 1079.5,949.0 1080.9,949.0 1082.4,937.6 1083.8,943.0 1085.2,938.5 1086.7,945.3 1088.1,949.0 1089.6,938.1 1091.0,943.0 1092.4,949.0 1093.9,947.3 1095.3,949.0 1096.7,949.0 1098.2,949.0 1099.6,949.0 1101.1,942.5 1102.5,949.0 1103.9,946.0 1105.4,949.0 1106.8,947.0 1108.2,949.0 1109.7,949.0 1111.1,949.0 1112.6,949.0 1114.0,949.0 1115.4,949.0 1116.9,949.0 1118.3,946.6 1119.7,932.8 1121.2,943.3 1122.6,949.0 1124.1,949.0 1125.5,949.0 1126.9,949.0 1128.4,934.8 1129.8,944.0 1131.2,949.0 1132.7,940.1 1134.1,945.9 1135.6,949.0 1137.0,949.0 1138.4,945.0 1139.9,949.0 1141.3,949.0 1142.7,939.8 1144.2,949.0 1145.6,949.0 1147.1,949.0 1148.5,949.0 1149.9,949.0 1151.4,940.4 1152.8,949.0 1154.2,949.0 1155.7,945.3 1157.1,945.5 1158.6,949.0 1160.0,949.0 1161.4,949.0 1162.9,946.8 1164.3,949.0 1165.7,949.0 1167.2,943.7 1168.6,941.5 1170.1,949.0 1171.5,945.9 1172.9,949.0 1174.4,943.9 1175.8,931.2 1177.2,942.8 1178.7,949.0 1180.1,949.0 1181.6,945.6 1183.0,949.0 1184.4,946.7 1185.9,949.0 1187.3,949.0 1188.7,949.0 1190.2,949.0 1191.6,949.0 1193.1,949.0 1194.5,943.9 1195.9,949.0 1197.4,949.0 1198.8,940.9 1200.2,946.2 1201.7,942.5 1203.1,949.0 1204.5,946.5 1206.0,937.6 1207.4,945.0 1208.9,949.0 1210.3,949.0 1211.7,949.0 1213.2,945.7 1214.6,949.0 1216.0,938.8 1217.5,949.0 1218.9,949.0 1220.4,945.1 1221.8,949.0 1223.2,949.0 1224.7,949.0 1226.1,947.4 1227.5,941.7 1229.0,946.4 1230.4,949.0 1231.9,949.0 1233.3,949.0 1234.7,949.0 1236.2,949.0 1237.6,949.0 1239.0,949.0 1240.5,949.0 1241.9,949.0 1243.4,942.8 1244.8,949.0 1246.2,949.0 1247.7,949.0 1249.1,949.0 1250.5,949.0 1252.0,949.0 1253.4,949.0 1254.9,937.8 1256.3,949.0 1257.7,949.0 1259.2,949.0 1260.6,949.0 1262.0,949.0 1263.5,949.0 1264.9,949.0 1266.4,943.1 1267.8,949.0 1269.2,949.0 1270.7,949.0 1272.1,949.0 1273.5,949.0 1275.0,949.0 1276.4,949.0 1277.9,949.0 1279.3,949.0 1280.7,949.0 1282.2,949.0 1283.6,949.0 1285.0,949.0 1286.5,949.0 1287.9,949.0 1289.4,949.0 1290.8,949.0 1291.8,948.6 1293.0,820.0 1293.7,771.0 1294.3,771.0 1295.2,850.0 1296.8,930.0 1298.6,948.6 1299.4,946.0 1300.9,949.0 1302.3,939.0 1303.7,949.0 1305.2,949.0 1306.6,949.0 1308.0,949.0 1309.5,949.0 1310.9,949.0 1312.4,949.0 1313.8,949.0 1315.2,949.0 1316.7,949.0 1318.1,949.0 1319.5,949.0 1321.0,949.0 1322.4,949.0 1323.9,944.5 1325.3,949.0 1326.7,949.0 1328.2,949.0 1329.6,946.8 1331.0,949.0 1332.5,949.0 1333.9,949.0 1335.4,949.0 1336.8,949.0 1338.2,949.0 1339.7,949.0 1341.1,949.0 1342.5,949.0 1344.0,949.0 1345.4,949.0 1346.9,944.6 1348.3,949.0 1349.7,942.9 1351.1,949.0 1351.1,949.0" fill="none" stroke="#85A870" stroke-width="1.2" stroke-linejoin="round"/><path d="M1091.80 746.6V949.3" stroke="rgba(150,28,24,0.85)" stroke-width="1.5"/></svg>
<span class="t" style="left:719.24px;top:736.95px;font-size:15.7px;line-height:15.7px;color:#c7d0d9;letter-spacing:0.118px;-webkit-text-stroke:0.3px #c7d0d9;">5.0</span>
<span class="t" style="left:719.24px;top:777.95px;font-size:15.7px;line-height:15.7px;color:#c7d0d9;letter-spacing:0.118px;-webkit-text-stroke:0.3px #c7d0d9;">4.0</span>
<span class="t" style="left:719.24px;top:817.95px;font-size:15.7px;line-height:15.7px;color:#c7d0d9;letter-spacing:0.118px;-webkit-text-stroke:0.3px #c7d0d9;">3.0</span>
<span class="t" style="left:719.24px;top:858.95px;font-size:15.7px;line-height:15.7px;color:#c7d0d9;letter-spacing:0.118px;-webkit-text-stroke:0.3px #c7d0d9;">2.0</span>
<span class="t" style="left:719.24px;top:898.95px;font-size:15.7px;line-height:15.7px;color:#c7d0d9;letter-spacing:0.118px;-webkit-text-stroke:0.3px #c7d0d9;">1.0</span>
<span class="t" style="left:732.59px;top:939.95px;font-size:15.7px;line-height:15.7px;color:#c7d0d9;letter-spacing:0.253px;-webkit-text-stroke:0.3px #c7d0d9;">0</span>
<span class="t" style="left:767.48px;top:958.95px;font-size:15.7px;line-height:15.7px;color:#c7d0d9;letter-spacing:0.105px;-webkit-text-stroke:0.3px #c7d0d9;">00:00</span>
<span class="t" style="left:868.10px;top:958.95px;font-size:15.7px;line-height:15.7px;color:#c7d0d9;letter-spacing:0.105px;-webkit-text-stroke:0.3px #c7d0d9;">04:00</span>
<span class="t" style="left:968.72px;top:958.95px;font-size:15.7px;line-height:15.7px;color:#c7d0d9;letter-spacing:0.105px;-webkit-text-stroke:0.3px #c7d0d9;">08:00</span>
<span class="t" style="left:1069.33px;top:958.95px;font-size:15.7px;line-height:15.7px;color:#c7d0d9;letter-spacing:0.105px;-webkit-text-stroke:0.3px #c7d0d9;">12:00</span>
<span class="t" style="left:1169.95px;top:958.95px;font-size:15.7px;line-height:15.7px;color:#c7d0d9;letter-spacing:0.105px;-webkit-text-stroke:0.3px #c7d0d9;">16:00</span>
<span class="t" style="left:1270.57px;top:958.95px;font-size:15.7px;line-height:15.7px;color:#c7d0d9;letter-spacing:0.105px;-webkit-text-stroke:0.3px #c7d0d9;">20:00</span>
<div class="sw" style="left:735.00px;top:1002.40px;width:14.00px;height:2.00px;background:#85A870;"></div>
<span class="t" style="left:757.90px;top:994.80px;font-size:16px;line-height:16px;color:#d0d6dd;letter-spacing:0.110px;-webkit-text-stroke:0.3px #d0d6dd;">system-1m</span>
<span class="t" style="left:844.72px;top:994.80px;font-size:16px;line-height:16px;color:#c7d0d9;letter-spacing:-0.073px;-webkit-text-stroke:0.3px #c7d0d9;">Max: 4.41</span>
<span class="t" style="left:922.62px;top:994.80px;font-size:16px;line-height:16px;color:#c7d0d9;letter-spacing:-0.173px;-webkit-text-stroke:0.3px #c7d0d9;">Current: 0</span>
<div class="sw" style="left:1009.33px;top:1002.40px;width:14.00px;height:2.00px;background:#D8B250;"></div>
<span class="t" style="left:1032.23px;top:994.80px;font-size:16px;line-height:16px;color:#d0d6dd;letter-spacing:0.156px;-webkit-text-stroke:0.3px #d0d6dd;">cpus</span>
<span class="t" style="left:1074.26px;top:994.80px;font-size:16px;line-height:16px;color:#c7d0d9;letter-spacing:-0.073px;-webkit-text-stroke:0.3px #c7d0d9;">Max: 2.00</span>
<span class="t" style="left:1152.16px;top:994.80px;font-size:16px;line-height:16px;color:#c7d0d9;letter-spacing:-0.138px;-webkit-text-stroke:0.3px #c7d0d9;">Current: 2.00</span>
<div class="panel" style="left:1398.00px;top:684.00px;width:679.00px;height:344.00px;"></div>
<span class="t" style="left:1691.52px;top:694.46px;font-size:18.67px;line-height:18.67px;color:#ced4dd;letter-spacing:-0.078px;-webkit-text-stroke:1.15px #ced4dd;">Threads</span>
<svg class="ic" style="left:1434px;top:744px" width="614" height="183" viewBox="1434 744 614 183"><polygon points="1436.9,922.3 1436.9,854.2 1474.8,854.2 1477.3,852.0 1848.4,852.0 1850.4,848.5 1852.5,852.0 1896.5,852.0 1898.5,898.1 1901.1,854.2 1904.9,786.1 1906.9,832.2 1908.9,847.6 1910.9,843.2 1912.9,830.0 1914.9,845.4 1916.9,841.0 1918.9,843.2 1920.9,830.0 1922.9,843.2 1924.9,830.0 1926.9,836.6 1928.9,843.2 1930.9,841.0 1932.9,838.8 1934.9,836.6 1936.9,838.8 1938.9,836.6 1940.9,841.0 1942.9,841.0 1944.9,836.6 1946.9,838.8 1948.9,841.0 1950.9,836.6 1952.9,830.0 1954.9,832.2 1956.9,834.4 1958.9,832.2 1960.8,841.0 1962.8,843.2 1964.8,836.6 1966.8,827.9 1968.8,823.5 1970.8,830.0 1972.8,825.7 1974.8,832.2 1976.8,834.4 1978.8,825.7 1980.8,827.9 1982.8,830.0 1984.8,827.9 1986.8,836.6 1988.8,830.0 1990.8,823.5 1992.8,832.2 1994.8,838.8 1996.8,827.9 1998.8,821.3 2000.8,825.7 2002.8,830.0 2004.8,841.0 2006.8,836.6 2008.8,830.0 2010.8,825.7 2012.8,832.2 2014.8,830.0 2016.8,825.7 2018.8,823.5 2020.8,827.9 2022.8,832.2 2024.8,825.7 2026.8,834.4 2028.8,838.8 2030.8,830.0 2032.8,821.3 2034.8,825.7 2036.8,832.2 2038.8,830.0 2040.8,834.4 2042.8,825.7 2043.3,827.9 2043.3,922.3" fill="#85A870" fill-opacity="0.1"/><polygon points="1436.9,922.3 1436.9,856.4 1474.8,856.4 1477.3,854.2 1848.4,854.2 1850.4,850.7 1852.5,854.2 1896.5,854.2 1898.5,900.3 1901.1,856.4 1904.9,788.3 1906.9,834.4 1908.9,849.8 1910.9,845.4 1912.9,832.2 1914.9,847.6 1916.9,843.2 1918.9,845.4 1920.9,832.2 1922.9,845.4 1924.9,832.2 1926.9,838.8 1928.9,845.4 1930.9,843.2 1932.9,841.0 1934.9,838.8 1936.9,841.0 1938.9,838.8 1940.9,843.2 1942.9,843.2 1944.9,838.8 1946.9,841.0 1948.9,843.2 1950.9,838.8 1952.9,832.2 1954.9,834.4 1956.9,836.6 1958.9,834.4 1960.8,843.2 1962.8,845.4 1964.8,838.8 1966.8,830.0 1968.8,825.7 1970.8,832.2 1972.8,827.9 1974.8,834.4 1976.8,836.6 1978.8,827.9 1980.8,830.0 1982.8,832.2 1984.8,830.0 1986.8,838.8 1988.8,832.2 1990.8,825.7 1992.8,834.4 1994.8,841.0 1996.8,830.0 1998.8,823.5 2000.8,827.9 2002.8,832.2 2004.8,843.2 2006.8,838.8 2008.8,832.2 2010.8,827.9 2012.8,834.4 2014.8,832.2 2016.8,827.9 2018.8,825.7 2020.8,830.0 2022.8,834.4 2024.8,827.9 2026.8,836.6 2028.8,841.0 2030.8,832.2 2032.8,823.5 2034.8,827.9 2036.8,834.4 2038.8,832.2 2040.8,836.6 2042.8,827.9 2043.3,830.0 2043.3,922.3" fill="#D8B250" fill-opacity="0.1"/><polygon points="1436.9,922.3 1436.9,852.0 1591.3,852.0 1593.8,849.8 1897.0,849.8 1898.5,895.9 1900.6,790.5 1902.9,790.5 1904.1,786.1 2043.3,786.1 2043.3,922.3" fill="#80C4D4" fill-opacity="0.1"/><path d="M1436.9 746.60H2044.8 M1436.9 790.52H2044.8 M1436.9 834.45H2044.8 M1436.9 878.38H2044.8 M1436.9 922.30H2044.8" stroke="rgba(204,204,210,0.2)" stroke-width="1.33" fill="none"/><path d="M1476.06 746.6V922.3 M1577.38 746.6V922.3 M1678.69 746.6V922.3 M1780.01 746.6V922.3 M1881.33 746.6V922.3 M1982.64 746.6V922.3" stroke="rgba(204,204,210,0.2)" stroke-width="1.33" fill="none"/><polyline points="1436.9,854.2 1474.8,854.2 1477.3,852.0 1848.4,852.0 1850.4,848.5 1852.5,852.0 1896.5,852.0 1898.5,898.1 1901.1,854.2 1904.9,786.1 1906.9,832.2 1908.9,847.6 1910.9,843.2 1912.9,830.0 1914.9,845.4 1916.9,841.0 1918.9,843.2 1920.9,830.0 1922.9,843.2 1924.9,830.0 1926.9,836.6 1928.9,843.2 1930.9,841.0 1932.9,838.8 1934.9,836.6 1936.9,838.8 1938.9,836.6 1940.9,841.0 1942.9,841.0 1944.9,836.6 1946.9,838.8 1948.9,841.0 1950.9,836.6 1952.9,830.0 1954.9,832.2 1956.9,834.4 1958.9,832.2 1960.8,841.0 1962.8,843.2 1964.8,836.6 1966.8,827.9 1968.8,823.5 1970.8,830.0 1972.8,825.7 1974.8,832.2 1976.8,834.4 1978.8,825.7 1980.8,827.9 1982.8,830.0 1984.8,827.9 1986.8,836.6 1988.8,830.0 1990.8,823.5 1992.8,832.2 1994.8,838.8 1996.8,827.9 1998.8,821.3 2000.8,825.7 2002.8,830.0 2004.8,841.0 2006.8,836.6 2008.8,830.0 2010.8,825.7 2012.8,832.2 2014.8,830.0 2016.8,825.7 2018.8,823.5 2020.8,827.9 2022.8,832.2 2024.8,825.7 2026.8,834.4 2028.8,838.8 2030.8,830.0 2032.8,821.3 2034.8,825.7 2036.8,832.2 2038.8,830.0 2040.8,834.4 2042.8,825.7 2043.3,827.9" fill="none" stroke="#85A870" stroke-width="1.2" stroke-linejoin="round"/><polyline points="1436.9,856.4 1474.8,856.4 1477.3,854.2 1848.4,854.2 1850.4,850.7 1852.5,854.2 1896.5,854.2 1898.5,900.3 1901.1,856.4 1904.9,788.3 1906.9,834.4 1908.9,849.8 1910.9,845.4 1912.9,832.2 1914.9,847.6 1916.9,843.2 1918.9,845.4 1920.9,832.2 1922.9,845.4 1924.9,832.2 1926.9,838.8 1928.9,845.4 1930.9,843.2 1932.9,841.0 1934.9,838.8 1936.9,841.0 1938.9,838.8 1940.9,843.2 1942.9,843.2 1944.9,838.8 1946.9,841.0 1948.9,843.2 1950.9,838.8 1952.9,832.2 1954.9,834.4 1956.9,836.6 1958.9,834.4 1960.8,843.2 1962.8,845.4 1964.8,838.8 1966.8,830.0 1968.8,825.7 1970.8,832.2 1972.8,827.9 1974.8,834.4 1976.8,836.6 1978.8,827.9 1980.8,830.0 1982.8,832.2 1984.8,830.0 1986.8,838.8 1988.8,832.2 1990.8,825.7 1992.8,834.4 1994.8,841.0 1996.8,830.0 1998.8,823.5 2000.8,827.9 2002.8,832.2 2004.8,843.2 2006.8,838.8 2008.8,832.2 2010.8,827.9 2012.8,834.4 2014.8,832.2 2016.8,827.9 2018.8,825.7 2020.8,830.0 2022.8,834.4 2024.8,827.9 2026.8,836.6 2028.8,841.0 2030.8,832.2 2032.8,823.5 2034.8,827.9 2036.8,834.4 2038.8,832.2 2040.8,836.6 2042.8,827.9 2043.3,830.0" fill="none" stroke="#D8B250" stroke-width="1.3" stroke-linejoin="round"/><polyline points="1436.9,852.0 1591.3,852.0 1593.8,849.8 1897.0,849.8 1898.5,895.9 1900.6,790.5 1902.9,790.5 1904.1,786.1 2043.3,786.1" fill="none" stroke="#80C4D4" stroke-width="1.3" stroke-linejoin="round"/><path d="M1782.19 746.6V922.3" stroke="rgba(150,28,24,0.85)" stroke-width="1.5"/></svg>
<span class="t" style="left:1411.62px;top:736.95px;font-size:15.7px;line-height:15.7px;color:#c7d0d9;letter-spacing:0.253px;-webkit-text-stroke:0.3px #c7d0d9;">80</span>
<span class="t" style="left:1411.62px;top:780.95px;font-size:15.7px;line-height:15.7px;color:#c7d0d9;letter-spacing:0.253px;-webkit-text-stroke:0.3px #c7d0d9;">60</span>
<span class="t" style="left:1411.62px;top:824.95px;font-size:15.7px;line-height:15.7px;color:#c7d0d9;letter-spacing:0.253px;-webkit-text-stroke:0.3px #c7d0d9;">40</span>
<span class="t" style="left:1411.62px;top:868.95px;font-size:15.7px;line-height:15.7px;color:#c7d0d9;letter-spacing:0.253px;-webkit-text-stroke:0.3px #c7d0d9;">20</span>
<span class="t" style="left:1420.59px;top:912.95px;font-size:15.7px;line-height:15.7px;color:#c7d0d9;letter-spacing:0.253px;-webkit-text-stroke:0.3px #c7d0d9;">0</span>
<span class="t" style="left:1455.75px;top:930.95px;font-size:15.7px;line-height:15.7px;color:#c7d0d9;letter-spacing:0.105px;-webkit-text-stroke:0.3px #c7d0d9;">00:00</span>
<span class="t" style="left:1557.07px;top:930.95px;font-size:15.7px;line-height:15.7px;color:#c7d0d9;letter-spacing:0.105px;-webkit-text-stroke:0.3px #c7d0d9;">04:00</span>
<span class="t" style="left:1658.39px;top:930.95px;font-size:15.7px;line-height:15.7px;color:#c7d0d9;letter-spacing:0.105px;-webkit-text-stroke:0.3px #c7d0d9;">08:00</span>
<span class="t" style="left:1759.70px;top:930.95px;font-size:15.7px;line-height:15.7px;color:#c7d0d9;letter-spacing:0.105px;-webkit-text-stroke:0.3px #c7d0d9;">12:00</span>
<span class="t" style="left:1861.02px;top:930.95px;font-size:15.7px;line-height:15.7px;color:#c7d0d9;letter-spacing:0.105px;-webkit-text-stroke:0.3px #c7d0d9;">16:00</span>
<span class="t" style="left:1962.34px;top:930.95px;font-size:15.7px;line-height:15.7px;color:#c7d0d9;letter-spacing:0.105px;-webkit-text-stroke:0.3px #c7d0d9;">20:00</span>
<div class="sw" style="left:1427.00px;top:973.90px;width:14.00px;height:2.00px;background:#85A870;"></div>
<span class="t" style="left:1449.90px;top:965.80px;font-size:16px;line-height:16px;color:#d0d6dd;letter-spacing:-0.004px;-webkit-text-stroke:0.3px #d0d6dd;">live</span>
<span class="t" style="left:1481.49px;top:965.80px;font-size:16px;line-height:16px;color:#c7d0d9;letter-spacing:-0.073px;-webkit-text-stroke:0.3px #c7d0d9;">Max: 62.0</span>
<span class="t" style="left:1559.39px;top:965.80px;font-size:16px;line-height:16px;color:#c7d0d9;letter-spacing:-0.138px;-webkit-text-stroke:0.3px #c7d0d9;">Current: 43.0</span>
<div class="sw" style="left:1668.29px;top:973.90px;width:14.00px;height:2.00px;background:#D8B250;"></div>
<span class="t" style="left:1691.19px;top:965.80px;font-size:16px;line-height:16px;color:#d0d6dd;letter-spacing:0.060px;-webkit-text-stroke:0.3px #d0d6dd;">daemon</span>
<span class="t" style="left:1756.97px;top:965.80px;font-size:16px;line-height:16px;color:#c7d0d9;letter-spacing:-0.073px;-webkit-text-stroke:0.3px #c7d0d9;">Max: 61.0</span>
<span class="t" style="left:1834.87px;top:965.80px;font-size:16px;line-height:16px;color:#c7d0d9;letter-spacing:-0.138px;-webkit-text-stroke:0.3px #c7d0d9;">Current: 42.0</span>
<div class="sw" style="left:1427.00px;top:1002.40px;width:14.00px;height:2.00px;background:#80C4D4;"></div>
<span class="t" style="left:1449.90px;top:994.80px;font-size:16px;line-height:16px;color:#d0d6dd;letter-spacing:-0.107px;-webkit-text-stroke:0.3px #d0d6dd;">peak</span>
<span class="t" style="left:1491.77px;top:994.80px;font-size:16px;line-height:16px;color:#c7d0d9;letter-spacing:-0.073px;-webkit-text-stroke:0.3px #c7d0d9;">Max: 62.0</span>
<span class="t" style="left:1569.67px;top:994.80px;font-size:16px;line-height:16px;color:#c7d0d9;letter-spacing:-0.138px;-webkit-text-stroke:0.3px #c7d0d9;">Current: 62.0</span>
<div class="panel" style="left:2091.00px;top:684.00px;width:679.00px;height:344.00px;"></div>
<span class="t" style="left:2360.56px;top:694.46px;font-size:18.67px;line-height:18.67px;color:#ced4dd;letter-spacing:-0.107px;-webkit-text-stroke:1.15px #ced4dd;">Thread States</span>
<svg class="ic" style="left:2126px;top:744px" width="614" height="154" viewBox="2126 744 614 154"><polygon points="2128.9,893.5 2128.9,808.9 2588.5,808.9 2590.0,871.4 2591.6,871.4 2593.1,816.3 2595.6,808.9 2735.3,808.9 2735.3,893.5" fill="#85A870" fill-opacity="0.1"/><polygon points="2128.9,893.5 2128.9,882.5 2446.7,882.5 2449.2,875.1 2451.7,882.5 2510.0,882.5 2512.5,875.1 2515.6,882.5 2594.9,882.5 2596.9,875.1 2599.2,882.5 2735.3,882.5 2735.3,893.5" fill="#BC6A32" fill-opacity="0.1"/><polygon points="2128.9,893.5 2128.9,875.1 2166.8,875.1 2170.1,871.4 2446.7,871.4 2449.2,882.5 2451.7,871.4 2510.0,871.4 2512.5,882.5 2515.6,871.4 2540.4,871.4 2542.4,867.0 2544.5,871.4 2589.0,871.4 2591.1,886.1 2593.6,878.8 2595.3,768.4 2597.3,842.0 2599.3,867.8 2601.3,856.7 2603.4,864.1 2605.4,838.3 2607.4,860.4 2609.4,856.7 2611.5,838.3 2613.5,856.7 2615.5,838.3 2617.5,853.0 2619.5,856.7 2621.6,853.0 2623.6,849.4 2625.6,853.0 2627.6,845.7 2629.7,853.0 2631.7,853.0 2633.7,853.0 2635.7,849.4 2637.7,853.0 2639.8,849.4 2641.8,834.7 2643.8,842.0 2645.8,842.0 2647.8,838.3 2649.9,853.0 2651.9,856.7 2653.9,842.0 2655.9,827.3 2658.0,834.7 2660.0,827.3 2662.0,838.3 2664.0,842.0 2666.0,831.0 2668.1,834.7 2670.1,838.3 2672.1,849.4 2674.1,834.7 2676.1,827.3 2678.2,842.0 2680.2,849.4 2682.2,831.0 2684.2,823.6 2686.3,831.0 2688.3,834.7 2690.3,853.0 2692.3,845.7 2694.3,834.7 2696.4,827.3 2698.4,838.3 2700.4,834.7 2702.4,827.3 2704.5,823.6 2706.5,831.0 2708.5,838.3 2710.5,827.3 2712.5,842.0 2714.6,849.4 2716.6,834.7 2718.6,823.6 2720.6,831.0 2722.6,838.3 2724.7,834.7 2726.7,842.0 2728.7,827.3 2730.7,831.0 2732.8,831.0 2734.8,834.7 2735.3,831.0 2735.3,893.5" fill="#D8B250" fill-opacity="0.1"/><path d="M2128.9 746.40H2736.8 M2128.9 783.17H2736.8 M2128.9 819.95H2736.8 M2128.9 856.73H2736.8 M2128.9 893.50H2736.8" stroke="rgba(204,204,210,0.2)" stroke-width="1.33" fill="none"/><path d="M2168.06 746.4V893.5 M2269.38 746.4V893.5 M2370.69 746.4V893.5 M2472.01 746.4V893.5 M2573.33 746.4V893.5 M2674.64 746.4V893.5" stroke="rgba(204,204,210,0.2)" stroke-width="1.33" fill="none"/><polyline points="2128.9,808.9 2588.5,808.9 2590.0,871.4 2591.6,871.4 2593.1,816.3 2595.6,808.9 2735.3,808.9" fill="none" stroke="#85A870" stroke-width="1.15" stroke-linejoin="round"/><polyline points="2128.9,882.5 2446.7,882.5 2449.2,875.1 2451.7,882.5 2510.0,882.5 2512.5,875.1 2515.6,882.5 2594.9,882.5 2596.9,875.1 2599.2,882.5 2735.3,882.5" fill="none" stroke="#BC6A32" stroke-width="1.15" stroke-linejoin="round"/><polyline points="2128.9,875.1 2166.8,875.1 2170.1,871.4 2446.7,871.4 2449.2,882.5 2451.7,871.4 2510.0,871.4 2512.5,882.5 2515.6,871.4 2540.4,871.4 2542.4,867.0 2544.5,871.4 2589.0,871.4 2591.1,886.1 2593.6,878.8 2595.3,768.4 2597.3,842.0 2599.3,867.8 2601.3,856.7 2603.4,864.1 2605.4,838.3 2607.4,860.4 2609.4,856.7 2611.5,838.3 2613.5,856.7 2615.5,838.3 2617.5,853.0 2619.5,856.7 2621.6,853.0 2623.6,849.4 2625.6,853.0 2627.6,845.7 2629.7,853.0 2631.7,853.0 2633.7,853.0 2635.7,849.4 2637.7,853.0 2639.8,849.4 2641.8,834.7 2643.8,842.0 2645.8,842.0 2647.8,838.3 2649.9,853.0 2651.9,856.7 2653.9,842.0 2655.9,827.3 2658.0,834.7 2660.0,827.3 2662.0,838.3 2664.0,842.0 2666.0,831.0 2668.1,834.7 2670.1,838.3 2672.1,849.4 2674.1,834.7 2676.1,827.3 2678.2,842.0 2680.2,849.4 2682.2,831.0 2684.2,823.6 2686.3,831.0 2688.3,834.7 2690.3,853.0 2692.3,845.7 2694.3,834.7 2696.4,827.3 2698.4,838.3 2700.4,834.7 2702.4,827.3 2704.5,823.6 2706.5,831.0 2708.5,838.3 2710.5,827.3 2712.5,842.0 2714.6,849.4 2716.6,834.7 2718.6,823.6 2720.6,831.0 2722.6,838.3 2724.7,834.7 2726.7,842.0 2728.7,827.3 2730.7,831.0 2732.8,831.0 2734.8,834.7 2735.3,831.0" fill="none" stroke="#D8B250" stroke-width="1.15" stroke-linejoin="round"/><polyline points="2128.9,894.0 2735.3,894.0" fill="none" stroke="#643653" stroke-width="2" stroke-linejoin="round"/><path d="M2474.19 746.4V893.5" stroke="rgba(150,28,24,0.85)" stroke-width="1.5"/></svg>
<span class="t" style="left:2103.62px;top:736.95px;font-size:15.7px;line-height:15.7px;color:#c7d0d9;letter-spacing:0.253px;-webkit-text-stroke:0.3px #c7d0d9;">40</span>
<span class="t" style="left:2103.62px;top:773.95px;font-size:15.7px;line-height:15.7px;color:#c7d0d9;letter-spacing:0.253px;-webkit-text-stroke:0.3px #c7d0d9;">30</span>
<span class="t" style="left:2103.62px;top:809.95px;font-size:15.7px;line-height:15.7px;color:#c7d0d9;letter-spacing:0.253px;-webkit-text-stroke:0.3px #c7d0d9;">20</span>
<span class="t" style="left:2103.62px;top:846.95px;font-size:15.7px;line-height:15.7px;color:#c7d0d9;letter-spacing:0.253px;-webkit-text-stroke:0.3px #c7d0d9;">10</span>
<span class="t" style="left:2112.59px;top:883.95px;font-size:15.7px;line-height:15.7px;color:#c7d0d9;letter-spacing:0.253px;-webkit-text-stroke:0.3px #c7d0d9;">0</span>
<span class="t" style="left:2147.75px;top:902.95px;font-size:15.7px;line-height:15.7px;color:#c7d0d9;letter-spacing:0.105px;-webkit-text-stroke:0.3px #c7d0d9;">00:00</span>
<span class="t" style="left:2249.07px;top:902.95px;font-size:15.7px;line-height:15.7px;color:#c7d0d9;letter-spacing:0.105px;-webkit-text-stroke:0.3px #c7d0d9;">04:00</span>
<span class="t" style="left:2350.39px;top:902.95px;font-size:15.7px;line-height:15.7px;color:#c7d0d9;letter-spacing:0.105px;-webkit-text-stroke:0.3px #c7d0d9;">08:00</span>
<span class="t" style="left:2451.70px;top:902.95px;font-size:15.7px;line-height:15.7px;color:#c7d0d9;letter-spacing:0.105px;-webkit-text-stroke:0.3px #c7d0d9;">12:00</span>
<span class="t" style="left:2553.02px;top:902.95px;font-size:15.7px;line-height:15.7px;color:#c7d0d9;letter-spacing:0.105px;-webkit-text-stroke:0.3px #c7d0d9;">16:00</span>
<span class="t" style="left:2654.34px;top:902.95px;font-size:15.7px;line-height:15.7px;color:#c7d0d9;letter-spacing:0.105px;-webkit-text-stroke:0.3px #c7d0d9;">20:00</span>
<div class="sw" style="left:2119.20px;top:946.90px;width:14.00px;height:2.00px;background:#BE3C28;"></div>
<span class="t" style="left:2142.10px;top:938.80px;font-size:16px;line-height:16px;color:#d0d6dd;letter-spacing:0.117px;-webkit-text-stroke:0.3px #d0d6dd;">blocked</span>
<span class="t" style="left:2205.67px;top:938.80px;font-size:16px;line-height:16px;color:#c7d0d9;letter-spacing:-0.099px;-webkit-text-stroke:0.3px #c7d0d9;">Max: 0</span>
<span class="t" style="left:2261.39px;top:938.80px;font-size:16px;line-height:16px;color:#c7d0d9;letter-spacing:-0.173px;-webkit-text-stroke:0.3px #c7d0d9;">Current: 0</span>
<div class="sw" style="left:2348.10px;top:946.90px;width:14.00px;height:2.00px;background:#F8DED7;"></div>
<span class="t" style="left:2371.00px;top:938.80px;font-size:16px;line-height:16px;color:#d0d6dd;letter-spacing:-0.008px;-webkit-text-stroke:0.3px #d0d6dd;">new</span>
<span class="t" style="left:2407.93px;top:938.80px;font-size:16px;line-height:16px;color:#c7d0d9;letter-spacing:-0.099px;-webkit-text-stroke:0.3px #c7d0d9;">Max: 0</span>
<span class="t" style="left:2463.65px;top:938.80px;font-size:16px;line-height:16px;color:#c7d0d9;letter-spacing:-0.173px;-webkit-text-stroke:0.3px #c7d0d9;">Current: 0</span>
<div class="sw" style="left:2119.20px;top:974.70px;width:14.00px;height:2.00px;background:#85A870;"></div>
<span class="t" style="left:2142.10px;top:966.80px;font-size:16px;line-height:16px;color:#d0d6dd;letter-spacing:-0.043px;-webkit-text-stroke:0.3px #d0d6dd;">runnable</span>
<span class="t" style="left:2211.63px;top:966.80px;font-size:16px;line-height:16px;color:#c7d0d9;letter-spacing:-0.057px;-webkit-text-stroke:0.3px #c7d0d9;">Max: 23.00</span>
<span class="t" style="left:2298.52px;top:966.80px;font-size:16px;line-height:16px;color:#c7d0d9;letter-spacing:-0.122px;-webkit-text-stroke:0.3px #c7d0d9;">Current: 23.00</span>
<div class="sw" style="left:2416.39px;top:974.70px;width:14.00px;height:2.00px;background:#5A2355;"></div>
<span class="t" style="left:2439.29px;top:966.80px;font-size:16px;line-height:16px;color:#d0d6dd;letter-spacing:0.169px;-webkit-text-stroke:0.3px #d0d6dd;">terminated</span>
<span class="t" style="left:2524.18px;top:966.80px;font-size:16px;line-height:16px;color:#c7d0d9;letter-spacing:-0.099px;-webkit-text-stroke:0.3px #c7d0d9;">Max: 0</span>
<span class="t" style="left:2579.90px;top:966.80px;font-size:16px;line-height:16px;color:#c7d0d9;letter-spacing:-0.173px;-webkit-text-stroke:0.3px #c7d0d9;">Current: 0</span>
<div class="sw" style="left:2119.20px;top:1002.60px;width:14.00px;height:2.00px;background:#BC6A32;"></div>
<span class="t" style="left:2142.10px;top:994.80px;font-size:16px;line-height:16px;color:#d0d6dd;letter-spacing:0.178px;-webkit-text-stroke:0.3px #d0d6dd;">timed-waiting</span>
<span class="t" style="left:2246.27px;top:994.80px;font-size:16px;line-height:16px;color:#c7d0d9;letter-spacing:-0.073px;-webkit-text-stroke:0.3px #c7d0d9;">Max: 5.00</span>
<span class="t" style="left:2324.17px;top:994.80px;font-size:16px;line-height:16px;color:#c7d0d9;letter-spacing:-0.138px;-webkit-text-stroke:0.3px #c7d0d9;">Current: 3.00</span>
<div class="sw" style="left:2433.07px;top:1002.60px;width:14.00px;height:2.00px;background:#D8B250;"></div>
<span class="t" style="left:2455.97px;top:994.80px;font-size:16px;line-height:16px;color:#d0d6dd;letter-spacing:0.245px;-webkit-text-stroke:0.3px #d0d6dd;">waiting</span>
<span class="t" style="left:2515.09px;top:994.80px;font-size:16px;line-height:16px;color:#c7d0d9;letter-spacing:-0.057px;-webkit-text-stroke:0.3px #c7d0d9;">Max: 34.00</span>
<span class="t" style="left:2601.98px;top:994.80px;font-size:16px;line-height:16px;color:#c7d0d9;letter-spacing:-0.122px;-webkit-text-stroke:0.3px #c7d0d9;">Current: 17.00</span>
<div class="panel" style="left:14.00px;top:1090.00px;width:2756.00px;height:410.00px;"></div>
<span class="t" style="left:1316.86px;top:1100.46px;font-size:18.67px;line-height:18.67px;color:#ced4dd;letter-spacing:-0.540px;-webkit-text-stroke:1.15px #ced4dd;">PS Eden Space</span>
<svg class="ic" style="left:91px;top:1150px" width="2649" height="209" viewBox="91 1150 2649 209"><polygon points="93.6,1354.3 93.6,1187.2 1780.0,1187.2 1890.0,1186.8 2097.0,1186.8 2099.0,1189.3 2106.0,1189.3 2108.0,1193.9 2116.0,1193.9 2117.5,1199.9 2122.0,1199.9 2123.0,1200.7 2125.1,1198.1 2127.2,1200.2 2129.3,1197.6 2131.4,1199.8 2133.5,1197.1 2135.6,1199.3 2137.7,1196.6 2139.8,1198.8 2141.9,1196.2 2144.0,1198.3 2146.1,1195.7 2148.2,1197.9 2150.3,1195.2 2152.4,1197.4 2154.5,1194.7 2156.6,1196.9 2158.7,1194.3 2160.8,1196.4 2162.9,1193.8 2165.0,1196.0 2167.1,1193.3 2169.2,1195.5 2171.3,1192.8 2173.4,1195.0 2175.5,1192.4 2177.6,1194.5 2179.7,1191.9 2181.8,1194.1 2183.9,1191.4 2186.0,1193.6 2188.1,1190.9 2190.2,1193.1 2192.3,1190.5 2194.4,1192.6 2196.5,1190.0 2198.6,1192.2 2200.7,1189.5 2202.8,1191.7 2204.9,1189.0 2207.0,1191.2 2207.0,1189.3 2216.0,1188.9 2225.0,1188.9 2234.0,1189.3 2243.0,1189.3 2252.0,1188.9 2261.0,1189.6 2270.0,1189.8 2279.0,1188.9 2288.0,1189.3 2297.0,1188.9 2306.0,1189.3 2315.0,1188.5 2324.0,1189.6 2333.0,1189.3 2342.0,1188.9 2351.0,1189.3 2360.0,1189.3 2369.0,1189.8 2378.0,1189.6 2387.0,1188.9 2396.0,1188.5 2405.0,1188.9 2414.0,1189.6 2423.0,1189.6 2432.0,1189.8 2441.0,1188.5 2450.0,1189.3 2459.0,1189.3 2468.0,1189.8 2477.0,1189.3 2486.0,1188.5 2495.0,1188.9 2504.0,1189.6 2513.0,1189.8 2522.0,1189.3 2531.0,1189.8 2540.0,1188.5 2549.0,1189.3 2558.0,1189.3 2567.0,1188.5 2576.0,1188.9 2585.0,1189.3 2594.0,1189.3 2603.0,1188.5 2612.0,1189.3 2621.0,1188.5 2630.0,1188.5 2639.0,1189.3 2648.0,1189.6 2657.0,1188.9 2666.0,1189.8 2675.0,1189.6 2684.0,1189.8 2693.0,1188.5 2702.0,1189.6 2711.0,1189.6 2720.0,1189.8 2729.0,1188.5 2735.5,1188.9 2735.5,1354.3" fill="#80C4D4" fill-opacity="0.1"/><polygon points="2098.0,1360.0 2098.0,1360.0 2100.0,1327.0 2104.0,1324.0 2116.0,1323.8 2130.0,1326.0 2165.0,1334.0 2190.0,1340.0 2190.0,1360.0" fill="#D8B250" fill-opacity="0.1"/><polygon points="2099.0,1360.0 2099.0,1340.0 2101.0,1327.0 2103.6,1338.0 2106.2,1327.0 2108.8,1338.0 2111.4,1327.0 2114.0,1338.0 2116.6,1327.0 2119.2,1338.0 2121.8,1327.0 2124.4,1338.0 2127.0,1327.0 2129.6,1338.0 2132.2,1327.0 2134.8,1338.0 2137.4,1327.0 2140.0,1338.0 2142.6,1327.0 2145.2,1338.0 2147.8,1327.0 2150.4,1338.0 2153.0,1327.0 2155.6,1338.0 2158.2,1327.0 2160.8,1338.0 2163.4,1327.0 2163.4,1360.0" fill="#85A870" fill-opacity="0.1"/><path d="M93.6 1152.30H2737.0 M93.6 1202.80H2737.0 M93.6 1253.30H2737.0 M93.6 1303.80H2737.0 M93.6 1354.30H2737.0" stroke="rgba(204,204,210,0.2)" stroke-width="1.33" fill="none"/><path d="M263.88 1152.3V1354.3 M374.02 1152.3V1354.3 M484.16 1152.3V1354.3 M594.30 1152.3V1354.3 M704.45 1152.3V1354.3 M814.59 1152.3V1354.3 M924.73 1152.3V1354.3 M1034.87 1152.3V1354.3 M1145.01 1152.3V1354.3 M1255.15 1152.3V1354.3 M1365.30 1152.3V1354.3 M1475.44 1152.3V1354.3 M1585.58 1152.3V1354.3 M1695.72 1152.3V1354.3 M1805.86 1152.3V1354.3 M1916.00 1152.3V1354.3 M2026.15 1152.3V1354.3 M2136.29 1152.3V1354.3 M2246.43 1152.3V1354.3 M2356.57 1152.3V1354.3 M2466.71 1152.3V1354.3 M2576.85 1152.3V1354.3 M2687.00 1152.3V1354.3 M153.74 1152.3V1354.3" stroke="rgba(204,204,210,0.2)" stroke-width="1.33" fill="none"/><polyline points="93.6,1187.2 1780.0,1187.2 1890.0,1186.8 2097.0,1186.8 2099.0,1189.3 2106.0,1189.3 2108.0,1193.9 2116.0,1193.9 2117.5,1199.9 2122.0,1199.9 2123.0,1200.7 2125.1,1198.1 2127.2,1200.2 2129.3,1197.6 2131.4,1199.8 2133.5,1197.1 2135.6,1199.3 2137.7,1196.6 2139.8,1198.8 2141.9,1196.2 2144.0,1198.3 2146.1,1195.7 2148.2,1197.9 2150.3,1195.2 2152.4,1197.4 2154.5,1194.7 2156.6,1196.9 2158.7,1194.3 2160.8,1196.4 2162.9,1193.8 2165.0,1196.0 2167.1,1193.3 2169.2,1195.5 2171.3,1192.8 2173.4,1195.0 2175.5,1192.4 2177.6,1194.5 2179.7,1191.9 2181.8,1194.1 2183.9,1191.4 2186.0,1193.6 2188.1,1190.9 2190.2,1193.1 2192.3,1190.5 2194.4,1192.6 2196.5,1190.0 2198.6,1192.2 2200.7,1189.5 2202.8,1191.7 2204.9,1189.0 2207.0,1191.2 2207.0,1189.3 2216.0,1188.9 2225.0,1188.9 2234.0,1189.3 2243.0,1189.3 2252.0,1188.9 2261.0,1189.6 2270.0,1189.8 2279.0,1188.9 2288.0,1189.3 2297.0,1188.9 2306.0,1189.3 2315.0,1188.5 2324.0,1189.6 2333.0,1189.3 2342.0,1188.9 2351.0,1189.3 2360.0,1189.3 2369.0,1189.8 2378.0,1189.6 2387.0,1188.9 2396.0,1188.5 2405.0,1188.9 2414.0,1189.6 2423.0,1189.6 2432.0,1189.8 2441.0,1188.5 2450.0,1189.3 2459.0,1189.3 2468.0,1189.8 2477.0,1189.3 2486.0,1188.5 2495.0,1188.9 2504.0,1189.6 2513.0,1189.8 2522.0,1189.3 2531.0,1189.8 2540.0,1188.5 2549.0,1189.3 2558.0,1189.3 2567.0,1188.5 2576.0,1188.9 2585.0,1189.3 2594.0,1189.3 2603.0,1188.5 2612.0,1189.3 2621.0,1188.5 2630.0,1188.5 2639.0,1189.3 2648.0,1189.6 2657.0,1188.9 2666.0,1189.8 2675.0,1189.6 2684.0,1189.8 2693.0,1188.5 2702.0,1189.6 2711.0,1189.6 2720.0,1189.8 2729.0,1188.5 2735.5,1188.9" fill="none" stroke="#80C4D4" stroke-width="1.3" stroke-linejoin="round"/><polyline points="2098.0,1360.0 2100.0,1327.0 2104.0,1324.0 2116.0,1323.8 2130.0,1326.0 2165.0,1334.0 2190.0,1340.0" fill="none" stroke="#D8B250" stroke-width="1.4" stroke-linejoin="round"/><polyline points="2099.0,1340.0 2101.0,1327.0 2103.6,1338.0 2106.2,1327.0 2108.8,1338.0 2111.4,1327.0 2114.0,1338.0 2116.6,1327.0 2119.2,1338.0 2121.8,1327.0 2124.4,1338.0 2127.0,1327.0 2129.6,1338.0 2132.2,1327.0 2134.8,1338.0 2137.4,1327.0 2140.0,1338.0 2142.6,1327.0 2145.2,1338.0 2147.8,1327.0 2150.4,1338.0 2153.0,1327.0 2155.6,1338.0 2158.2,1327.0 2160.8,1338.0 2163.4,1327.0" fill="none" stroke="#85A870" stroke-width="1.1" stroke-linejoin="round"/><rect x="1997.9" y="1186" width="4.3" height="200" fill="#141619"/><path d="M1595.05 1152.3V1354.3" stroke="rgba(150,28,24,0.85)" stroke-width="1.5"/></svg>
<span class="t" style="left:27.22px;top:1142.95px;font-size:15.7px;line-height:15.7px;color:#c7d0d9;letter-spacing:0.162px;-webkit-text-stroke:0.3px #c7d0d9;">381 MiB</span>
<span class="t" style="left:27.22px;top:1192.95px;font-size:15.7px;line-height:15.7px;color:#c7d0d9;letter-spacing:0.162px;-webkit-text-stroke:0.3px #c7d0d9;">286 MiB</span>
<span class="t" style="left:27.22px;top:1243.95px;font-size:15.7px;line-height:15.7px;color:#c7d0d9;letter-spacing:0.162px;-webkit-text-stroke:0.3px #c7d0d9;">191 MiB</span>
<span class="t" style="left:36.18px;top:1293.95px;font-size:15.7px;line-height:15.7px;color:#c7d0d9;letter-spacing:0.146px;-webkit-text-stroke:0.3px #c7d0d9;">95 MiB</span>
<span class="t" style="left:62.62px;top:1344.95px;font-size:15.7px;line-height:15.7px;color:#c7d0d9;letter-spacing:-0.220px;-webkit-text-stroke:0.3px #c7d0d9;">0 B</span>
</div></body></html>
